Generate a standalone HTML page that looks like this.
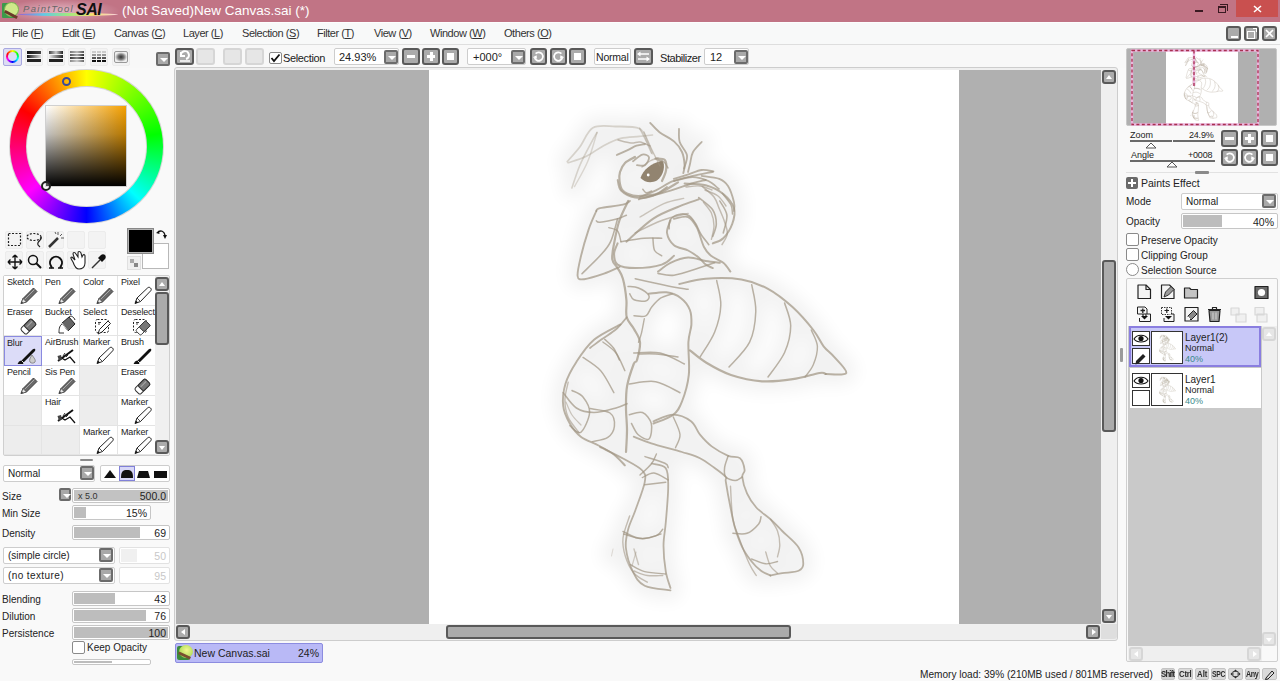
<!DOCTYPE html>
<html><head><meta charset="utf-8">
<style>
*{margin:0;padding:0;box-sizing:border-box}
html,body{width:1280px;height:681px;overflow:hidden;background:#f9f9f9;font-family:"Liberation Sans",sans-serif;font-size:11px;color:#222}
div,span,i,b{position:absolute}
.t{white-space:nowrap;line-height:1}
.mi{top:28px;font-size:11px;color:#333;letter-spacing:-0.45px}
.btn{border:2px solid #595959;background:#ababab;border-radius:3px}
.btnd{border:2px solid #d6d6d6;background:#e6e6e6;border-radius:3px}
.box{border:1px solid #cdcdcd;background:#fff;border-radius:2px}
.dd{border:2px solid #6b6b6b;background:#a9a9a9;border-radius:2px;width:14px;height:14px}
.dd:after{content:"";position:absolute;left:2px;top:4px;border-left:4px solid transparent;border-right:4px solid transparent;border-top:4px solid #fff}
.bar{border:1px solid #c6c6c6;background:#fff;border-radius:2px;overflow:hidden;height:15px}
.bar i{left:1px;top:1px;bottom:1px;background:#bdbdbd}
.bar b{right:3px;top:1px;font-weight:normal;font-size:10.5px;line-height:12px;color:#222}
.lbl{font-size:10px;color:#222;white-space:nowrap;line-height:1}
.cell{width:38px;height:30px;background:#fff;border-right:1px solid #e4e4e4;border-bottom:1px solid #e4e4e4}
.cell span{left:3px;top:2px;font-size:9px;color:#222;white-space:nowrap;line-height:1;letter-spacing:-0.15px}
.ec{background:#ededed}
.ti{width:18px;height:18px;background:#f3f3f3;border:1px solid #ececec;border-radius:2px}
</style></head><body>
<!-- ============ TITLE BAR ============ -->
<div style="left:0;top:0;width:1280px;height:22px;background:#c17485"></div>
<div style="left:0;top:0;width:120px;height:22px;background:radial-gradient(ellipse 60px 12px at 60px 11px,rgba(255,235,245,.55),rgba(255,235,245,0))"></div>
<div style="left:2px;top:3px;width:14px;height:15px;background:#3c9a4a;border-radius:1px"></div>
<div style="left:4px;top:2px;width:15px;height:15px;background:#cfe88a;border-radius:50%;border:1px solid #7ab050"></div>
<div style="left:4px;top:13px;width:14px;height:3px;background:#6a3a2a;transform:rotate(28deg)"></div>
<div style="left:18px;top:13px;width:100px;height:3px;border-radius:50%;background:linear-gradient(90deg,#9a60d0,#60c8e8,#a0e880,#f8e070,#f8d0e0)"></div>
<div class="t" style="left:23px;top:4px;font-size:9.5px;font-style:italic;color:#666;letter-spacing:1.3px">PaintTool</div>
<div class="t" style="left:76px;top:2px;font-size:16px;font-style:italic;font-weight:bold;color:#111;letter-spacing:-0.5px">SAI</div>
<div class="t" style="left:122px;top:4px;font-size:13.5px;color:#fff">(Not Saved)New Canvas.sai (*)</div>
<div style="left:1195px;top:10px;width:8px;height:2px;background:#3a1a22"></div>
<div style="left:1218px;top:6px;width:8px;height:7px;border:1px solid #3a1a22;border-top-width:2px"></div>
<div style="left:1220px;top:4px;width:8px;height:7px;border-top:1px solid #3a1a22;border-right:1px solid #3a1a22"></div>
<div style="left:1236px;top:0;width:42px;height:17px;background:#c9504f"></div>
<svg style="position:absolute;left:1253px;top:5px" width="9" height="8"><path d="M1 1L8 7M8 1L1 7" stroke="#fff" stroke-width="1.6"/></svg>

<!-- ============ MENU ============ -->
<div style="left:0;top:22px;width:1280px;height:23px;background:#f8f9f9;border-top:1px solid #fdfefe;border-bottom:1px solid #dedede"></div>
<div class="t mi" style="left:12px">File (<u>F</u>)</div>
<div class="t mi" style="left:62px">Edit (<u>E</u>)</div>
<div class="t mi" style="left:114px">Canvas (<u>C</u>)</div>
<div class="t mi" style="left:183px">Layer (<u>L</u>)</div>
<div class="t mi" style="left:242px">Selection (<u>S</u>)</div>
<div class="t mi" style="left:317px">Filter (<u>T</u>)</div>
<div class="t mi" style="left:374px">View (<u>V</u>)</div>
<div class="t mi" style="left:430px">Window (<u>W</u>)</div>
<div class="t mi" style="left:504px">Others (<u>O</u>)</div>
<div class="btn" style="left:1226px;top:26px;width:15px;height:15px"><i style="left:3px;top:8px;width:7px;height:2px;background:#fff"></i></div>
<div class="btn" style="left:1244px;top:26px;width:15px;height:15px"><i style="left:1px;top:3px;width:8px;height:8px;border:1.5px solid #fff"></i><i style="left:7px;top:0px;width:4px;height:4px;border-top:1px solid #fff;border-right:1px solid #fff"></i></div>
<div class="btn" style="left:1262px;top:26px;width:15px;height:15px"><svg style="position:absolute;left:1px;top:1px" width="9" height="9"><path d="M1 1L8 8M8 1L1 8" stroke="#fff" stroke-width="1.6"/></svg></div>

<!-- ============ TOOLBAR ============ -->
<div style="left:0;top:45px;width:1280px;height:23px;background:#f8f8f8"></div>
<div style="left:3px;top:48px;width:19px;height:18px;background:#dcdcf4;border:1px solid #a8a8e0;border-radius:2px"></div>
<div style="left:6px;top:50px;width:13px;height:13px;border-radius:50%;background:conic-gradient(#ff0,#0f0,#0ff,#00f,#f0f,#f00,#ff0)"></div>
<div style="left:8px;top:52px;width:9px;height:9px;border-radius:50%;background:#dcdcf4"></div>
<div class="ti" style="left:25px;top:48px"><i style="left:1px;top:2px;width:14px;height:3px;background:linear-gradient(90deg,#111,#444)"></i><i style="left:1px;top:6px;width:14px;height:3px;background:linear-gradient(90deg,#111,#ddd)"></i><i style="left:1px;top:10px;width:14px;height:3px;background:#222"></i></div>
<div class="ti" style="left:47px;top:48px"><i style="left:1px;top:2px;width:14px;height:3px;background:linear-gradient(90deg,#444,#ccc,#222)"></i><i style="left:1px;top:6px;width:14px;height:3px;background:linear-gradient(90deg,#eee,#222)"></i><i style="left:1px;top:10px;width:14px;height:3px;background:#222"></i></div>
<div class="ti" style="left:68px;top:48px"><i style="left:1px;top:2px;width:14px;height:2px;background:linear-gradient(90deg,#777,#bbb,#555)"></i><i style="left:1px;top:5px;width:14px;height:2px;background:linear-gradient(90deg,#555,#aaa,#333)"></i><i style="left:1px;top:8px;width:14px;height:2px;background:linear-gradient(90deg,#333,#888,#111)"></i><i style="left:1px;top:11px;width:14px;height:2px;background:linear-gradient(90deg,#888,#ccc,#666)"></i></div>
<div class="ti" style="left:90px;top:48px"><i style="left:1px;top:2px;width:14px;height:2px;background:repeating-linear-gradient(90deg,#ccc 0 2px,transparent 2px 2.5px)"></i><i style="left:1px;top:5px;width:14px;height:2px;background:repeating-linear-gradient(90deg,#999 0 2px,transparent 2px 2.5px)"></i><i style="left:1px;top:8px;width:14px;height:2px;background:repeating-linear-gradient(90deg,#555 0 2px,transparent 2px 2.5px)"></i><i style="left:1px;top:11px;width:14px;height:2px;background:repeating-linear-gradient(90deg,#111 0 2px,transparent 2px 2.5px)"></i></div>
<div class="ti" style="left:112px;top:48px"><i style="left:1px;top:2px;width:14px;height:12px;border:1px solid #999;border-radius:2px;background:radial-gradient(ellipse 5px 4px at 6px 5px,#333 0,#777 3px,#eee 6px)"></i></div>
<div class="dd" style="left:156px;top:52px"></div>
<div class="btn" style="left:175px;top:48px;width:19px;height:17px"><svg style="position:absolute;left:1px;top:0" width="14" height="13"><path d="M3 2L3 6L7 6M3 6A4 4 0 1 1 8 9" fill="none" stroke="#fff" stroke-width="2"/><path d="M2 11H12" stroke="#fff" stroke-width="1.5"/></svg></div>
<div class="btnd" style="left:196px;top:48px;width:19px;height:17px"></div>
<div class="btnd" style="left:223px;top:48px;width:19px;height:17px"></div>
<div class="btnd" style="left:245px;top:48px;width:19px;height:17px"></div>
<div style="left:269px;top:52px;width:13px;height:12px;border:1px solid #8a8a8a;background:#fff;border-radius:2px"><svg style="position:absolute;left:0;top:0" width="11" height="10"><path d="M1.5 5L4 8L9.5 1.5" fill="none" stroke="#111" stroke-width="1.8"/></svg></div>
<div class="t" style="left:283px;top:53px;font-size:11px;color:#222;letter-spacing:-0.35px">Selection</div>
<div class="box" style="left:334px;top:48px;width:65px;height:17px"></div>
<div class="t" style="left:339px;top:52px;font-size:11px">24.93%</div>
<div class="dd" style="left:384px;top:50px"></div>
<div class="btn" style="left:402px;top:48px;width:18px;height:17px"><i style="left:3px;top:5px;width:8px;height:3px;background:#fff"></i></div>
<div class="btn" style="left:422px;top:48px;width:18px;height:17px"><i style="left:3px;top:5px;width:8px;height:3px;background:#fff"></i><i style="left:5.5px;top:2px;width:3px;height:9px;background:#fff"></i></div>
<div class="btn" style="left:442px;top:48px;width:17px;height:17px"><i style="left:3px;top:3px;width:7px;height:7px;background:#fff"></i></div>
<div class="box" style="left:467px;top:48px;width:59px;height:17px"></div>
<div class="t" style="left:473px;top:52px;font-size:11px">+000°</div>
<div class="dd" style="left:511px;top:50px"></div>
<div class="btn" style="left:530px;top:48px;width:17px;height:17px"><svg style="position:absolute;left:0;top:0" width="13" height="13"><path d="M2.6 7.6A4.2 4.2 0 1 0 3.6 3.7" fill="none" stroke="#fff" stroke-width="1.7"/><path d="M0.8 7.2L4.6 5.2L5 8.8Z" fill="#fff"/></svg></div>
<div class="btn" style="left:550px;top:48px;width:17px;height:17px"><svg style="position:absolute;left:0;top:0" width="13" height="13"><path d="M10.4 7.6A4.2 4.2 0 1 1 9.4 3.7" fill="none" stroke="#fff" stroke-width="1.7"/><path d="M12.2 7.2L8.4 5.2L8 8.8Z" fill="#fff"/></svg></div>
<div class="btn" style="left:569px;top:48px;width:17px;height:17px"><i style="left:3px;top:3px;width:7px;height:7px;background:#fff"></i></div>
<div class="box" style="left:594px;top:48px;width:37px;height:17px"></div>
<div class="t" style="left:596px;top:52px;font-size:10.5px;letter-spacing:-0.2px">Normal</div>
<div class="btn" style="left:634px;top:48px;width:19px;height:17px"><svg style="position:absolute;left:0;top:0" width="15" height="13"><path d="M4 4H13M2 9H11" stroke="#fff" stroke-width="1.6"/><path d="M1 4L4.5 1.5V6.5Z M14 9L10.5 6.5V11.5Z" fill="#fff"/></svg></div>
<div class="t" style="left:660px;top:53px;font-size:11px;letter-spacing:-0.45px">Stabilizer</div>
<div class="box" style="left:704px;top:48px;width:45px;height:17px"></div>
<div class="t" style="left:710px;top:52px;font-size:11px">12</div>
<div class="dd" style="left:734px;top:50px"></div>

<!-- ============ CANVAS ============ -->
<div style="left:174px;top:67px;width:944px;height:574px;background:#efefef;border:1px solid #cdcdcd;border-radius:3px"></div>
<div style="left:176px;top:70px;width:925px;height:554px;background:#b0b0b0"></div>
<div id="page" style="left:429px;top:70px;width:530px;height:554px;background:#fff;overflow:hidden"><svg style="position:absolute;left:0;top:0" width="530" height="554" viewBox="429 70 530 554">
<defs><radialGradient id="hz"><stop offset="0" stop-color="#000" stop-opacity=".03"/><stop offset="1" stop-color="#000" stop-opacity="0"/></radialGradient></defs>
<filter id="bl" x="-20%" y="-20%" width="140%" height="140%"><feGaussianBlur stdDeviation="9"/></filter>
<g filter="url(#bl)" opacity="0.05" fill="none" stroke="#000" stroke-width="20" stroke-linecap="round"><path d="M567.3 161.5C569.4 159.1 575.5 152.6 579.8 147.0C584.1 141.4 587.0 131.2 593.0 127.8C599.0 124.4 607.8 126.4 615.5 126.5C623.2 126.6 634.0 126.0 639.3 128.5C644.6 131.0 645.0 137.5 647.2 141.7C649.4 145.9 651.6 151.6 652.5 153.6"/><path d="M568.0 162.8C571.1 161.7 580.5 159.0 586.4 156.2C592.3 153.3 597.9 148.7 603.6 145.7C609.3 142.7 614.8 139.9 620.8 138.4C626.8 136.9 634.0 137.0 639.3 136.4C644.6 135.8 650.3 135.2 652.5 135.0"/><path d="M571.9 188.0C573.2 184.2 576.7 172.8 579.8 165.5C582.9 158.2 587.5 149.8 590.4 144.3C593.3 138.8 595.9 134.5 597.0 132.5"/><path d="M574.5 186.6C576.7 182.4 584.0 170.5 587.7 161.5C591.5 152.5 595.5 137.3 597.0 132.5"/><path d="M650.2 122.9C651.8 124.5 655.5 129.1 659.5 132.2C663.5 135.3 670.2 138.1 674.0 141.4C677.8 144.7 680.2 148.0 682.0 152.0C683.8 156.0 684.4 161.7 684.6 165.2C684.8 168.7 683.5 171.8 683.3 173.1"/><path d="M679.0 128.8C679.1 131.0 678.4 137.6 679.7 142.0C681.0 146.4 686.3 150.9 687.0 155.3C687.7 159.7 684.5 166.3 684.0 168.5"/><path d="M701.7 142.0C700.2 143.7 694.9 148.6 692.9 152.3C690.9 156.0 690.8 160.7 690.0 164.0C689.2 167.3 688.3 170.7 688.0 172.0"/><path d="M616.8 155.0C618.8 154.1 625.4 151.2 628.7 149.6C632.0 148.0 633.9 146.6 636.6 145.7C639.3 144.8 643.6 144.3 645.0 144.0"/><path d="M618.0 140.0C620.2 140.5 627.3 142.7 631.0 143.0C634.7 143.3 636.8 141.5 640.0 142.0C643.2 142.5 648.3 145.3 650.0 146.0"/><path d="M644.0 132.0C645.3 135.0 649.3 144.3 652.0 150.0C654.7 155.7 658.7 163.3 660.0 166.0"/><path d="M658.0 160.0C659.0 160.3 662.3 160.7 664.0 162.0C665.7 163.3 667.3 167.0 668.0 168.0"/><path d="M635.0 157.0C633.3 158.0 627.5 160.5 625.0 163.0C622.5 165.5 620.9 169.0 620.0 172.0C619.1 175.0 619.1 177.9 619.5 181.0C619.9 184.1 620.2 187.9 622.5 190.3C624.8 192.7 629.0 194.7 633.0 195.6C637.0 196.5 641.9 196.0 646.3 195.6C650.7 195.2 654.2 195.2 659.5 193.0C664.8 190.8 674.9 184.2 678.0 182.4"/><path d="M633.0 161.3C634.5 160.2 639.6 155.3 642.3 154.6C645.0 153.9 648.5 155.5 649.0 157.3C649.5 159.1 647.0 163.9 645.0 165.2C643.0 166.5 638.3 165.2 637.0 165.2"/><path d="M639.6 128.2C640.7 130.4 644.3 137.2 646.3 141.4C648.3 145.6 650.6 151.3 651.5 153.3"/><path d="M674.0 181.1C677.1 180.4 686.8 177.1 692.5 177.1C698.2 177.1 704.0 179.1 708.4 181.1C712.8 183.1 717.2 187.7 719.0 189.0"/><path d="M642.8 189.3C643.4 189.9 644.8 192.5 646.3 192.8C647.8 193.1 650.7 191.3 651.6 191.0"/><path d="M655.5 158.6C657.0 158.8 663.0 158.0 664.8 160.0C666.5 162.0 666.5 167.0 666.0 170.5C665.5 174.0 662.7 179.2 662.0 181.0"/><path d="M642.0 167.0C643.3 166.0 647.3 162.5 650.0 161.0C652.7 159.5 656.7 158.5 658.0 158.0"/><path d="M673.8 178.8C676.2 178.1 683.9 175.8 688.5 174.3C693.1 172.8 697.6 170.5 701.7 170.0C705.9 169.5 711.5 171.2 713.4 171.4"/><path d="M701.7 175.8C704.6 176.3 714.9 177.1 719.3 178.8C723.7 180.5 725.5 182.1 728.0 186.0C730.5 189.9 733.0 198.1 734.0 202.3C735.0 206.5 734.0 209.6 734.0 211.0"/><path d="M722.3 193.4C723.8 195.3 729.3 201.6 731.0 205.0C732.7 208.4 732.2 212.5 732.5 214.0"/><path d="M638.8 199.4C644.1 197.9 661.7 193.2 670.5 190.6C679.3 187.9 685.7 185.3 691.6 183.5C697.5 181.7 703.4 180.6 705.7 180.0"/><path d="M684.6 183.5C688.1 183.8 699.2 183.6 705.7 185.3C712.2 187.1 718.6 190.2 723.3 194.0C728.0 197.8 732.5 203.2 734.0 208.2C735.5 213.2 734.0 219.0 732.2 224.0C730.4 229.0 726.5 235.0 723.3 238.2C720.1 241.4 714.5 242.5 712.8 243.4"/><path d="M698.7 197.6C701.1 199.7 709.9 205.6 712.8 210.0C715.7 214.4 716.3 219.6 716.3 224.0C716.3 228.4 713.4 234.3 712.8 236.4"/><path d="M719.8 201.0C721.0 203.4 726.3 209.9 726.9 215.2C727.5 220.5 723.9 229.9 723.3 232.9"/><path d="M626.4 241.7C630.8 237.9 644.1 224.7 652.9 218.8C661.7 212.9 671.7 209.6 679.3 206.4C686.9 203.2 695.5 200.6 698.7 199.4"/><path d="M635.2 232.9C639.6 230.8 652.9 223.7 661.7 220.5C670.5 217.3 683.7 214.7 688.1 213.5"/><path d="M686.0 187.0C688.3 186.8 695.7 185.5 700.0 186.0C704.3 186.5 710.0 189.3 712.0 190.0"/><path d="M705.0 190.0C707.2 191.0 714.5 193.3 718.0 196.0C721.5 198.7 724.7 204.3 726.0 206.0"/><path d="M640.0 197.0C642.6 195.9 650.4 193.0 655.9 190.4C661.4 187.8 666.8 183.6 673.0 181.2C679.2 178.8 686.3 177.4 692.9 175.9C699.5 174.4 709.5 172.6 712.8 171.9"/><path d="M702.2 186.5C704.2 188.2 711.1 193.2 714.0 197.0C716.9 200.8 717.6 204.8 719.4 209.0C721.2 213.2 723.4 218.0 724.7 222.2C726.0 226.4 727.8 230.2 727.3 234.0C726.8 237.8 722.9 242.9 722.0 244.7"/><path d="M703.5 202.3C704.8 204.1 709.6 209.1 711.4 213.0C713.1 216.9 714.0 221.6 714.0 226.0C714.0 230.4 711.8 237.2 711.4 239.4"/><path d="M640.0 217.0C644.0 214.8 656.5 206.7 663.8 203.6C671.1 200.5 680.4 199.3 683.7 198.4"/><path d="M669.1 228.8C669.3 227.2 668.6 221.9 670.4 219.5C672.2 217.1 676.6 214.8 679.7 214.2C682.8 213.5 686.4 214.0 689.0 215.6C691.6 217.2 693.6 220.4 695.6 223.5C697.6 226.6 698.6 230.5 700.8 234.0C703.0 237.5 707.5 242.9 708.8 244.7"/><path d="M596.3 211.0C595.0 214.1 591.1 222.1 588.6 229.6C586.1 237.1 582.8 248.3 581.0 256.0C579.2 263.7 577.1 272.1 577.6 276.0C578.1 279.9 579.8 279.6 584.2 279.2C588.6 278.8 598.1 275.7 604.0 273.7C609.9 271.7 616.9 268.1 619.5 267.0"/><path d="M596.3 211.0C596.9 210.5 595.6 209.2 600.0 208.2C604.4 207.1 617.9 205.9 622.9 204.7C627.9 203.5 628.8 201.6 630.0 201.0"/><path d="M596.3 220.8C596.9 221.1 596.5 222.6 600.0 222.3C603.5 222.0 613.2 220.0 617.6 218.8C622.0 217.6 624.9 215.8 626.4 215.2"/><path d="M617.6 218.8C616.4 222.6 613.5 235.5 610.6 241.7C607.7 247.9 604.8 250.5 600.0 255.8C595.2 261.1 585.0 270.7 582.0 273.7"/><path d="M628.2 201.0C626.7 204.2 621.8 213.4 619.4 220.5C617.0 227.6 615.3 236.9 614.1 243.4C612.9 249.9 611.7 255.2 612.3 259.3C612.9 263.4 615.8 264.9 617.6 268.1C619.4 271.3 621.4 273.4 622.9 278.7C624.4 284.0 625.8 293.4 626.4 299.8C627.0 306.2 625.4 312.4 626.7 317.3C628.0 322.2 631.8 324.8 634.0 329.0C636.2 333.2 639.5 337.1 640.0 342.3C640.5 347.5 638.0 356.4 637.0 360.0C636.0 363.6 635.4 359.7 633.7 364.0C632.1 368.3 628.4 378.7 627.1 386.0C625.8 393.3 626.0 400.7 626.0 408.0C626.0 415.3 627.0 422.7 627.0 430.0C627.0 437.3 626.2 448.3 626.0 452.0"/><path d="M617.6 243.4C617.0 245.2 614.1 250.5 614.1 254.0C614.1 257.5 614.1 262.2 617.6 264.6C621.1 267.0 627.9 268.1 635.2 268.1C642.6 268.1 655.2 266.7 661.7 264.6C668.2 262.6 672.0 257.3 674.0 255.8"/><path d="M621.0 241.7C624.8 241.1 637.2 238.8 644.0 238.2C650.8 237.6 658.8 238.2 661.7 238.2"/><path d="M608.8 227.6C610.3 228.2 615.6 228.7 617.6 231.0C619.6 233.3 620.4 239.9 621.0 241.7"/><path d="M652.9 238.2C653.2 240.2 653.1 247.6 654.6 250.5C656.1 253.4 660.5 254.9 661.7 255.8"/><path d="M635.2 278.7C640.5 279.9 658.2 283.9 667.0 285.7C675.8 287.5 684.6 288.7 688.1 289.3"/><path d="M617.6 180.0C618.2 181.8 618.1 187.7 621.0 190.6C623.9 193.5 629.9 196.7 635.2 197.6C640.5 198.5 647.6 197.7 652.9 195.9C658.2 194.1 664.6 188.5 667.0 187.0"/><path d="M670.5 220.5C669.9 222.6 666.4 228.8 667.0 232.9C667.6 237.0 670.5 242.3 674.0 245.2C677.5 248.1 684.0 248.4 688.1 250.5C692.2 252.6 695.8 255.2 698.7 257.5C701.6 259.9 703.4 262.8 705.7 264.6C708.1 266.4 711.6 267.5 712.8 268.1"/><path d="M674.0 218.8C676.4 218.5 684.3 215.5 688.1 217.0C691.9 218.5 694.2 222.6 696.9 227.6C699.5 232.6 701.6 242.3 704.0 247.0C706.4 251.7 707.8 253.2 711.0 255.8C714.2 258.4 720.1 260.2 723.3 262.8C726.5 265.4 729.2 270.1 730.4 271.6"/><path d="M658.0 271.6C660.1 270.1 665.5 265.2 670.5 262.8C675.5 260.4 682.2 257.8 688.1 257.5C694.0 257.2 700.4 260.1 705.7 261.0C711.0 261.9 717.4 262.5 719.8 262.8"/><path d="M658.0 273.4C660.7 273.7 667.2 276.1 674.0 275.2C680.8 274.3 692.0 270.2 698.7 268.1C705.5 266.0 711.9 263.7 714.5 262.8"/><path d="M679.3 284.0C683.7 283.1 695.4 279.4 705.7 278.7C716.1 277.9 731.0 277.8 741.4 279.5C751.8 281.2 759.4 284.2 768.0 288.8C776.6 293.4 785.2 300.4 792.8 307.3C800.3 314.2 808.2 323.5 813.3 330.0C818.4 336.5 820.2 341.9 823.6 346.3C827.0 350.7 830.1 352.2 833.9 356.6C837.7 361.1 847.6 370.1 846.2 373.0C844.8 375.9 829.1 373.8 825.7 374.0"/><path d="M690.0 350.4C692.7 352.5 699.6 358.7 706.4 362.8C713.2 366.9 721.7 371.9 731.0 375.0C740.3 378.1 751.7 380.6 762.0 381.3C772.3 382.0 783.2 380.6 792.8 379.2C802.4 377.8 814.0 373.9 819.5 373.0C825.0 372.1 824.7 373.8 825.7 374.0"/><path d="M716.7 280.6C717.4 284.7 721.1 296.6 720.8 305.2C720.5 313.8 718.1 323.4 714.7 332.0C711.3 340.6 702.7 352.5 700.3 356.6"/><path d="M751.7 284.7C752.4 289.1 756.1 301.8 755.8 311.4C755.4 321.0 754.1 332.9 749.6 342.2C745.1 351.5 732.4 362.9 729.0 367.0"/><path d="M784.6 303.0C785.6 306.8 790.7 317.6 790.7 325.8C790.7 334.1 788.4 344.0 784.6 352.5C780.8 361.0 770.8 372.9 768.0 377.0"/><path d="M811.3 330.0C812.3 332.7 817.1 340.5 817.4 346.3C817.7 352.1 815.4 359.7 813.3 364.8C811.2 369.9 806.4 375.0 805.0 377.0"/><path d="M620.5 324.4C616.1 327.0 601.4 333.6 594.0 339.8C586.6 346.1 581.2 354.5 576.4 361.9C571.6 369.2 567.6 376.6 565.4 383.9C563.2 391.2 562.5 399.3 563.2 405.9C563.9 412.5 566.9 418.4 569.8 423.5C572.7 428.6 576.0 433.0 580.8 436.7C585.6 440.4 593.0 442.6 598.5 445.5C604.0 448.4 609.5 451.1 613.9 454.4C618.3 457.7 623.1 463.6 624.9 465.4"/><path d="M626.7 317.3C625.0 319.2 620.6 325.3 616.4 329.0C612.2 332.7 606.1 336.1 601.7 339.3C597.3 342.5 592.0 346.6 590.0 348.0"/><path d="M604.7 339.3C606.2 340.8 611.0 344.6 613.5 348.0C616.0 351.4 618.4 358.0 619.4 360.0"/><path d="M648.8 293.8C651.7 293.6 661.0 291.6 666.4 292.3C671.8 293.0 677.1 295.2 681.0 298.2C684.9 301.1 688.2 305.6 689.9 310.0C691.6 314.4 691.6 319.2 691.4 324.6C691.1 330.0 688.8 333.9 688.4 342.3C688.0 350.7 689.9 365.1 688.8 375.0C687.7 384.9 684.6 394.9 682.0 401.5C679.4 408.1 678.0 411.0 673.3 414.7C668.5 418.4 656.8 422.0 653.5 423.5"/><path d="M634.0 315.8C636.0 315.8 642.8 317.3 645.8 315.8C648.8 314.3 649.2 309.9 651.7 307.0C654.2 304.1 657.1 300.4 660.5 298.2C663.9 296.0 670.3 294.5 672.3 293.8"/><path d="M644.3 318.8C643.8 321.2 642.4 329.5 641.4 333.4C640.4 337.3 639.0 340.8 638.5 342.3"/><path d="M628.0 286.4C629.8 286.7 635.0 286.5 638.5 288.0C642.0 289.5 647.6 293.1 648.8 295.3C650.0 297.5 648.3 300.3 645.8 301.0C643.3 301.7 636.7 300.9 634.0 299.7C631.3 298.5 630.4 294.8 629.7 293.8"/><path d="M638.5 354.0C641.4 354.0 649.4 353.5 656.0 354.0C662.6 354.5 674.3 356.5 678.0 357.0"/><path d="M583.0 357.4C586.0 359.6 595.6 364.8 600.7 370.7C605.9 376.6 611.7 389.0 613.9 392.7"/><path d="M602.9 342.0C605.1 343.8 612.3 348.2 616.0 353.0C619.7 357.8 623.4 367.8 624.9 370.7"/><path d="M563.2 392.7C565.4 395.2 571.3 404.7 576.4 408.0C581.5 411.3 587.4 412.5 594.0 412.5C600.6 412.5 610.5 409.5 616.0 408.0C621.5 406.5 625.2 404.4 627.0 403.7"/><path d="M572.0 390.5C573.8 391.6 580.1 393.3 583.0 397.0C585.9 400.7 590.0 406.6 589.6 412.5C589.2 418.4 584.1 430.1 580.8 432.3C577.5 434.5 571.6 426.8 569.8 425.7"/><path d="M568.2 382.2C567.7 385.1 564.9 393.9 564.9 399.8C564.9 405.7 565.8 411.9 568.2 417.4C570.6 422.9 577.4 430.2 579.2 432.8"/><path d="M590.2 408.6C593.5 409.3 606.0 410.1 610.0 413.0C614.0 415.9 614.8 422.1 614.4 426.2C614.0 430.3 611.5 434.8 607.8 437.4C604.1 440.0 595.0 440.9 592.4 441.6"/><path d="M566.0 402.0C567.0 404.2 569.5 411.2 572.0 415.0C574.5 418.8 579.5 423.3 581.0 425.0"/><path d="M633.7 353.0C638.1 353.0 651.5 351.2 660.0 353.0C668.5 354.8 680.3 362.2 684.4 364.0"/><path d="M629.3 383.9C633.7 383.5 647.2 380.2 655.7 381.7C664.2 383.2 676.0 390.9 680.0 392.7"/><path d="M629.3 414.7C631.5 414.3 638.8 411.0 642.5 412.5C646.2 414.0 650.2 419.1 651.3 423.5C652.4 427.9 651.2 437.2 649.0 439.0C646.8 440.8 640.9 437.1 638.0 434.5C635.1 431.9 632.6 425.3 631.5 423.5"/><path d="M673.3 417.0C674.4 419.9 679.6 429.4 680.0 434.5C680.4 439.6 676.2 445.5 675.5 447.7"/><path d="M653.5 421.3C656.8 420.2 667.0 414.7 673.3 414.7C679.5 414.7 686.5 418.0 691.0 421.3C695.5 424.6 696.5 430.5 700.0 434.7C703.5 438.9 707.0 442.9 711.7 446.4C716.4 449.9 723.5 453.8 728.2 455.8C732.9 457.8 737.2 455.8 739.9 458.2C742.6 460.6 744.2 466.9 744.6 470.0C745.0 473.1 741.9 473.1 742.3 477.0C742.7 480.9 744.7 488.3 747.0 493.4C749.3 498.5 752.4 503.2 756.3 507.5C760.2 511.8 766.1 515.3 770.4 519.2C774.7 523.1 777.5 526.3 782.2 531.0C786.9 535.7 795.1 541.9 798.6 547.4C802.1 552.9 803.3 559.9 803.3 563.8C803.3 567.7 802.1 569.2 798.6 570.8C795.1 572.4 786.9 572.4 782.2 573.2C777.5 574.0 772.4 575.1 770.4 575.5"/><path d="M633.7 436.7C636.6 437.8 643.2 440.8 651.3 443.3C659.3 445.9 673.9 449.5 682.0 452.0C690.1 454.5 694.7 455.6 700.0 458.2C705.3 460.8 709.7 464.5 714.0 467.6C718.3 470.7 723.8 474.7 725.8 477.0C727.8 479.3 725.0 476.5 725.8 481.6C726.6 486.7 728.9 499.7 730.5 507.5C732.1 515.3 733.2 522.0 735.2 528.6C737.2 535.2 739.6 541.9 742.3 547.4C745.0 552.9 748.5 557.6 751.6 561.5C754.7 565.4 757.9 568.5 761.0 570.8C764.1 573.1 768.8 574.7 770.4 575.5"/><path d="M730.5 486.3C730.9 491.8 731.3 510.2 732.9 519.2C734.5 528.2 737.2 532.9 739.9 540.3C742.6 547.7 746.6 557.9 749.3 563.8C752.0 569.7 755.1 573.5 756.3 575.5"/><path d="M770.4 519.2C771.6 521.2 775.9 526.7 777.5 531.0C779.1 535.3 779.8 540.7 779.8 545.0C779.8 549.3 777.9 554.8 777.5 556.8"/><path d="M728.2 455.8C727.6 457.8 725.0 464.1 724.6 467.6C724.2 471.1 724.0 474.9 725.8 477.0C727.6 479.1 732.5 480.5 735.2 480.5C738.0 480.5 741.1 477.6 742.3 477.0"/><path d="M732.9 533.3C735.2 533.3 742.7 534.9 747.0 533.3C751.3 531.7 756.4 526.6 758.7 523.9C761.0 521.1 760.6 518.0 761.0 516.8"/><path d="M751.6 559.0C754.0 559.8 761.4 563.4 765.7 563.8C770.0 564.2 775.5 561.9 777.5 561.5"/><path d="M765.7 552.0C766.5 554.3 768.4 562.5 770.4 566.0C772.4 569.5 776.3 572.0 777.5 573.2"/><path d="M600.0 447.0C603.9 449.0 616.5 454.9 623.5 458.8C630.5 462.7 638.8 466.6 642.3 470.5C645.8 474.4 645.9 475.6 644.7 482.3C643.5 489.0 638.0 502.7 635.3 510.5C632.5 518.3 629.8 523.0 628.2 529.3C626.6 535.5 625.1 541.0 625.9 548.0C626.7 555.0 629.8 565.3 632.9 571.6C636.0 577.9 638.4 582.6 644.7 585.7C651.0 588.8 666.2 589.6 670.5 590.4"/><path d="M651.7 463.5C654.1 464.3 663.0 464.3 665.8 468.2C668.5 472.1 668.2 478.0 668.2 487.0C668.2 496.0 666.6 512.5 665.8 522.3C665.0 532.1 663.5 537.6 663.5 545.8C663.5 554.0 664.6 564.6 665.8 571.6C667.0 578.6 669.7 585.3 670.5 588.0"/><path d="M642.3 477.6C644.2 476.8 649.7 472.6 654.0 473.0C658.3 473.4 665.8 478.8 668.2 480.0"/><path d="M644.7 484.7L665.8 482.3"/><path d="M640.0 475.0C642.0 473.1 649.0 467.0 651.7 463.5C654.4 460.0 655.6 455.6 656.4 454.0"/><path d="M623.5 534.0C626.6 534.8 636.0 538.7 642.3 538.7C648.5 538.7 657.9 534.8 661.0 534.0"/><path d="M630.5 564.6C632.9 565.8 638.8 570.0 644.7 571.6C650.6 573.2 662.3 573.6 665.8 574.0"/><path d="M629.6 516.0C628.5 519.7 623.7 531.4 623.0 538.0C622.3 544.6 623.4 549.8 625.2 555.7C627.0 561.6 630.3 568.9 634.0 573.3C637.7 577.7 645.1 580.7 647.3 582.2"/><path d="M634.0 571.0C636.2 571.8 642.5 574.8 647.3 575.5C652.1 576.2 660.1 575.5 662.7 575.5"/><path d="M634.0 549.0L638.5 564.5"/><path d="M636.0 552.0L632.0 566.0"/><path d="M613.0 549.0L611.5 556.0"/><path d="M623.0 531.5C625.6 532.6 633.0 537.4 638.5 538.1C644.0 538.8 652.0 537.4 656.0 535.9C660.0 534.4 661.6 530.4 662.7 529.3"/><path d="M645.0 456.6C648.3 457.7 661.0 461.4 664.9 463.2C668.8 465.0 667.7 466.9 668.2 467.6"/></g>
<path d="M640.5 178C643 170 651 163 662.5 160.5C665.5 165 664 175 657 180.5C651 183.5 645 182.5 640.5 178Z" fill="#928470"/><circle cx="648.2" cy="175" r="1.4" fill="#fff"/>
<g id="skg" fill="none" stroke="#a19583" stroke-linecap="round">
<path d="M567.3 161.5C569.4 159.1 575.5 152.6 579.8 147.0C584.1 141.4 587.0 131.2 593.0 127.8C599.0 124.4 607.8 126.4 615.5 126.5C623.2 126.6 634.0 126.0 639.3 128.5C644.6 131.0 645.0 137.5 647.2 141.7C649.4 145.9 651.6 151.6 652.5 153.6" stroke-width="1.8" stroke-opacity="0.36"/>
<path d="M568.0 162.8C571.1 161.7 580.5 159.0 586.4 156.2C592.3 153.3 597.9 148.7 603.6 145.7C609.3 142.7 614.8 139.9 620.8 138.4C626.8 136.9 634.0 137.0 639.3 136.4C644.6 135.8 650.3 135.2 652.5 135.0" stroke-width="1.6" stroke-opacity="0.36"/>
<path d="M571.9 188.0C573.2 184.2 576.7 172.8 579.8 165.5C582.9 158.2 587.5 149.8 590.4 144.3C593.3 138.8 595.9 134.5 597.0 132.5" stroke-width="1.6" stroke-opacity="0.36"/>
<path d="M574.5 186.6C576.7 182.4 584.0 170.5 587.7 161.5C591.5 152.5 595.5 137.3 597.0 132.5" stroke-width="1.4" stroke-opacity="0.32"/>
<path d="M650.2 122.9C651.8 124.5 655.5 129.1 659.5 132.2C663.5 135.3 670.2 138.1 674.0 141.4C677.8 144.7 680.2 148.0 682.0 152.0C683.8 156.0 684.4 161.7 684.6 165.2C684.8 168.7 683.5 171.8 683.3 173.1" stroke-width="1.9" stroke-opacity="0.72"/>
<path d="M679.0 128.8C679.1 131.0 678.4 137.6 679.7 142.0C681.0 146.4 686.3 150.9 687.0 155.3C687.7 159.7 684.5 166.3 684.0 168.5" stroke-width="1.8" stroke-opacity="0.72"/>
<path d="M701.7 142.0C700.2 143.7 694.9 148.6 692.9 152.3C690.9 156.0 690.8 160.7 690.0 164.0C689.2 167.3 688.3 170.7 688.0 172.0" stroke-width="1.8" stroke-opacity="0.72"/>
<path d="M616.8 155.0C618.8 154.1 625.4 151.2 628.7 149.6C632.0 148.0 633.9 146.6 636.6 145.7C639.3 144.8 643.6 144.3 645.0 144.0" stroke-width="1.8" stroke-opacity="0.72"/>
<path d="M618.0 140.0C620.2 140.5 627.3 142.7 631.0 143.0C634.7 143.3 636.8 141.5 640.0 142.0C643.2 142.5 648.3 145.3 650.0 146.0" stroke-width="1.5" stroke-opacity="0.58"/>
<path d="M644.0 132.0C645.3 135.0 649.3 144.3 652.0 150.0C654.7 155.7 658.7 163.3 660.0 166.0" stroke-width="1.4" stroke-opacity="0.50"/>
<path d="M658.0 160.0C659.0 160.3 662.3 160.7 664.0 162.0C665.7 163.3 667.3 167.0 668.0 168.0" stroke-width="1.4" stroke-opacity="0.72"/>
<path d="M635.0 157.0C633.3 158.0 627.5 160.5 625.0 163.0C622.5 165.5 620.9 169.0 620.0 172.0C619.1 175.0 619.1 177.9 619.5 181.0C619.9 184.1 620.2 187.9 622.5 190.3C624.8 192.7 629.0 194.7 633.0 195.6C637.0 196.5 641.9 196.0 646.3 195.6C650.7 195.2 654.2 195.2 659.5 193.0C664.8 190.8 674.9 184.2 678.0 182.4" stroke-width="2.2" stroke-opacity="0.72"/>
<path d="M633.0 161.3C634.5 160.2 639.6 155.3 642.3 154.6C645.0 153.9 648.5 155.5 649.0 157.3C649.5 159.1 647.0 163.9 645.0 165.2C643.0 166.5 638.3 165.2 637.0 165.2" stroke-width="1.8" stroke-opacity="0.72"/>
<path d="M639.6 128.2C640.7 130.4 644.3 137.2 646.3 141.4C648.3 145.6 650.6 151.3 651.5 153.3" stroke-width="1.5" stroke-opacity="0.43"/>
<path d="M674.0 181.1C677.1 180.4 686.8 177.1 692.5 177.1C698.2 177.1 704.0 179.1 708.4 181.1C712.8 183.1 717.2 187.7 719.0 189.0" stroke-width="1.6" stroke-opacity="0.72"/>
<path d="M642.8 189.3C643.4 189.9 644.8 192.5 646.3 192.8C647.8 193.1 650.7 191.3 651.6 191.0" stroke-width="1.5" stroke-opacity="0.72"/>
<path d="M655.5 158.6C657.0 158.8 663.0 158.0 664.8 160.0C666.5 162.0 666.5 167.0 666.0 170.5C665.5 174.0 662.7 179.2 662.0 181.0" stroke-width="2.2" stroke-opacity="0.72"/>
<path d="M642.0 167.0C643.3 166.0 647.3 162.5 650.0 161.0C652.7 159.5 656.7 158.5 658.0 158.0" stroke-width="1.4" stroke-opacity="0.50"/>
<path d="M673.8 178.8C676.2 178.1 683.9 175.8 688.5 174.3C693.1 172.8 697.6 170.5 701.7 170.0C705.9 169.5 711.5 171.2 713.4 171.4" stroke-width="1.9" stroke-opacity="0.72"/>
<path d="M701.7 175.8C704.6 176.3 714.9 177.1 719.3 178.8C723.7 180.5 725.5 182.1 728.0 186.0C730.5 189.9 733.0 198.1 734.0 202.3C735.0 206.5 734.0 209.6 734.0 211.0" stroke-width="1.8" stroke-opacity="0.72"/>
<path d="M722.3 193.4C723.8 195.3 729.3 201.6 731.0 205.0C732.7 208.4 732.2 212.5 732.5 214.0" stroke-width="1.5" stroke-opacity="0.72"/>
<path d="M638.8 199.4C644.1 197.9 661.7 193.2 670.5 190.6C679.3 187.9 685.7 185.3 691.6 183.5C697.5 181.7 703.4 180.6 705.7 180.0" stroke-width="1.9" stroke-opacity="0.72"/>
<path d="M684.6 183.5C688.1 183.8 699.2 183.6 705.7 185.3C712.2 187.1 718.6 190.2 723.3 194.0C728.0 197.8 732.5 203.2 734.0 208.2C735.5 213.2 734.0 219.0 732.2 224.0C730.4 229.0 726.5 235.0 723.3 238.2C720.1 241.4 714.5 242.5 712.8 243.4" stroke-width="2.0" stroke-opacity="0.72"/>
<path d="M698.7 197.6C701.1 199.7 709.9 205.6 712.8 210.0C715.7 214.4 716.3 219.6 716.3 224.0C716.3 228.4 713.4 234.3 712.8 236.4" stroke-width="1.6" stroke-opacity="0.72"/>
<path d="M719.8 201.0C721.0 203.4 726.3 209.9 726.9 215.2C727.5 220.5 723.9 229.9 723.3 232.9" stroke-width="1.6" stroke-opacity="0.72"/>
<path d="M626.4 241.7C630.8 237.9 644.1 224.7 652.9 218.8C661.7 212.9 671.7 209.6 679.3 206.4C686.9 203.2 695.5 200.6 698.7 199.4" stroke-width="2.0" stroke-opacity="0.72"/>
<path d="M635.2 232.9C639.6 230.8 652.9 223.7 661.7 220.5C670.5 217.3 683.7 214.7 688.1 213.5" stroke-width="1.5" stroke-opacity="0.58"/>
<path d="M686.0 187.0C688.3 186.8 695.7 185.5 700.0 186.0C704.3 186.5 710.0 189.3 712.0 190.0" stroke-width="1.4" stroke-opacity="0.58"/>
<path d="M705.0 190.0C707.2 191.0 714.5 193.3 718.0 196.0C721.5 198.7 724.7 204.3 726.0 206.0" stroke-width="1.4" stroke-opacity="0.58"/>
<path d="M640.0 197.0C642.6 195.9 650.4 193.0 655.9 190.4C661.4 187.8 666.8 183.6 673.0 181.2C679.2 178.8 686.3 177.4 692.9 175.9C699.5 174.4 709.5 172.6 712.8 171.9" stroke-width="1.8" stroke-opacity="0.72"/>
<path d="M702.2 186.5C704.2 188.2 711.1 193.2 714.0 197.0C716.9 200.8 717.6 204.8 719.4 209.0C721.2 213.2 723.4 218.0 724.7 222.2C726.0 226.4 727.8 230.2 727.3 234.0C726.8 237.8 722.9 242.9 722.0 244.7" stroke-width="1.5" stroke-opacity="0.58"/>
<path d="M703.5 202.3C704.8 204.1 709.6 209.1 711.4 213.0C713.1 216.9 714.0 221.6 714.0 226.0C714.0 230.4 711.8 237.2 711.4 239.4" stroke-width="1.4" stroke-opacity="0.58"/>
<path d="M640.0 217.0C644.0 214.8 656.5 206.7 663.8 203.6C671.1 200.5 680.4 199.3 683.7 198.4" stroke-width="1.4" stroke-opacity="0.50"/>
<path d="M669.1 228.8C669.3 227.2 668.6 221.9 670.4 219.5C672.2 217.1 676.6 214.8 679.7 214.2C682.8 213.5 686.4 214.0 689.0 215.6C691.6 217.2 693.6 220.4 695.6 223.5C697.6 226.6 698.6 230.5 700.8 234.0C703.0 237.5 707.5 242.9 708.8 244.7" stroke-width="1.6" stroke-opacity="0.72"/>
<path d="M596.3 211.0C595.0 214.1 591.1 222.1 588.6 229.6C586.1 237.1 582.8 248.3 581.0 256.0C579.2 263.7 577.1 272.1 577.6 276.0C578.1 279.9 579.8 279.6 584.2 279.2C588.6 278.8 598.1 275.7 604.0 273.7C609.9 271.7 616.9 268.1 619.5 267.0" stroke-width="1.9" stroke-opacity="0.72"/>
<path d="M596.3 211.0C596.9 210.5 595.6 209.2 600.0 208.2C604.4 207.1 617.9 205.9 622.9 204.7C627.9 203.5 628.8 201.6 630.0 201.0" stroke-width="1.8" stroke-opacity="0.72"/>
<path d="M596.3 220.8C596.9 221.1 596.5 222.6 600.0 222.3C603.5 222.0 613.2 220.0 617.6 218.8C622.0 217.6 624.9 215.8 626.4 215.2" stroke-width="1.5" stroke-opacity="0.72"/>
<path d="M617.6 218.8C616.4 222.6 613.5 235.5 610.6 241.7C607.7 247.9 604.8 250.5 600.0 255.8C595.2 261.1 585.0 270.7 582.0 273.7" stroke-width="1.6" stroke-opacity="0.72"/>
<path d="M628.2 201.0C626.7 204.2 621.8 213.4 619.4 220.5C617.0 227.6 615.3 236.9 614.1 243.4C612.9 249.9 611.7 255.2 612.3 259.3C612.9 263.4 615.8 264.9 617.6 268.1C619.4 271.3 621.4 273.4 622.9 278.7C624.4 284.0 625.8 293.4 626.4 299.8C627.0 306.2 625.4 312.4 626.7 317.3C628.0 322.2 631.8 324.8 634.0 329.0C636.2 333.2 639.5 337.1 640.0 342.3C640.5 347.5 638.0 356.4 637.0 360.0C636.0 363.6 635.4 359.7 633.7 364.0C632.1 368.3 628.4 378.7 627.1 386.0C625.8 393.3 626.0 400.7 626.0 408.0C626.0 415.3 627.0 422.7 627.0 430.0C627.0 437.3 626.2 448.3 626.0 452.0" stroke-width="2.2" stroke-opacity="0.72"/>
<path d="M617.6 243.4C617.0 245.2 614.1 250.5 614.1 254.0C614.1 257.5 614.1 262.2 617.6 264.6C621.1 267.0 627.9 268.1 635.2 268.1C642.6 268.1 655.2 266.7 661.7 264.6C668.2 262.6 672.0 257.3 674.0 255.8" stroke-width="2.0" stroke-opacity="0.72"/>
<path d="M621.0 241.7C624.8 241.1 637.2 238.8 644.0 238.2C650.8 237.6 658.8 238.2 661.7 238.2" stroke-width="1.6" stroke-opacity="0.72"/>
<path d="M608.8 227.6C610.3 228.2 615.6 228.7 617.6 231.0C619.6 233.3 620.4 239.9 621.0 241.7" stroke-width="1.4" stroke-opacity="0.72"/>
<path d="M652.9 238.2C653.2 240.2 653.1 247.6 654.6 250.5C656.1 253.4 660.5 254.9 661.7 255.8" stroke-width="1.5" stroke-opacity="0.72"/>
<path d="M635.2 278.7C640.5 279.9 658.2 283.9 667.0 285.7C675.8 287.5 684.6 288.7 688.1 289.3" stroke-width="1.5" stroke-opacity="0.72"/>
<path d="M617.6 180.0C618.2 181.8 618.1 187.7 621.0 190.6C623.9 193.5 629.9 196.7 635.2 197.6C640.5 198.5 647.6 197.7 652.9 195.9C658.2 194.1 664.6 188.5 667.0 187.0" stroke-width="1.8" stroke-opacity="0.72"/>
<path d="M670.5 220.5C669.9 222.6 666.4 228.8 667.0 232.9C667.6 237.0 670.5 242.3 674.0 245.2C677.5 248.1 684.0 248.4 688.1 250.5C692.2 252.6 695.8 255.2 698.7 257.5C701.6 259.9 703.4 262.8 705.7 264.6C708.1 266.4 711.6 267.5 712.8 268.1" stroke-width="1.9" stroke-opacity="0.72"/>
<path d="M674.0 218.8C676.4 218.5 684.3 215.5 688.1 217.0C691.9 218.5 694.2 222.6 696.9 227.6C699.5 232.6 701.6 242.3 704.0 247.0C706.4 251.7 707.8 253.2 711.0 255.8C714.2 258.4 720.1 260.2 723.3 262.8C726.5 265.4 729.2 270.1 730.4 271.6" stroke-width="1.9" stroke-opacity="0.72"/>
<path d="M658.0 271.6C660.1 270.1 665.5 265.2 670.5 262.8C675.5 260.4 682.2 257.8 688.1 257.5C694.0 257.2 700.4 260.1 705.7 261.0C711.0 261.9 717.4 262.5 719.8 262.8" stroke-width="1.9" stroke-opacity="0.72"/>
<path d="M658.0 273.4C660.7 273.7 667.2 276.1 674.0 275.2C680.8 274.3 692.0 270.2 698.7 268.1C705.5 266.0 711.9 263.7 714.5 262.8" stroke-width="1.6" stroke-opacity="0.72"/>
<path d="M679.3 284.0C683.7 283.1 695.4 279.4 705.7 278.7C716.1 277.9 731.0 277.8 741.4 279.5C751.8 281.2 759.4 284.2 768.0 288.8C776.6 293.4 785.2 300.4 792.8 307.3C800.3 314.2 808.2 323.5 813.3 330.0C818.4 336.5 820.2 341.9 823.6 346.3C827.0 350.7 830.1 352.2 833.9 356.6C837.7 361.1 847.6 370.1 846.2 373.0C844.8 375.9 829.1 373.8 825.7 374.0" stroke-width="2.0" stroke-opacity="0.72"/>
<path d="M690.0 350.4C692.7 352.5 699.6 358.7 706.4 362.8C713.2 366.9 721.7 371.9 731.0 375.0C740.3 378.1 751.7 380.6 762.0 381.3C772.3 382.0 783.2 380.6 792.8 379.2C802.4 377.8 814.0 373.9 819.5 373.0C825.0 372.1 824.7 373.8 825.7 374.0" stroke-width="2.2" stroke-opacity="0.72"/>
<path d="M716.7 280.6C717.4 284.7 721.1 296.6 720.8 305.2C720.5 313.8 718.1 323.4 714.7 332.0C711.3 340.6 702.7 352.5 700.3 356.6" stroke-width="1.5" stroke-opacity="0.72"/>
<path d="M751.7 284.7C752.4 289.1 756.1 301.8 755.8 311.4C755.4 321.0 754.1 332.9 749.6 342.2C745.1 351.5 732.4 362.9 729.0 367.0" stroke-width="1.5" stroke-opacity="0.72"/>
<path d="M784.6 303.0C785.6 306.8 790.7 317.6 790.7 325.8C790.7 334.1 788.4 344.0 784.6 352.5C780.8 361.0 770.8 372.9 768.0 377.0" stroke-width="1.5" stroke-opacity="0.72"/>
<path d="M811.3 330.0C812.3 332.7 817.1 340.5 817.4 346.3C817.7 352.1 815.4 359.7 813.3 364.8C811.2 369.9 806.4 375.0 805.0 377.0" stroke-width="1.4" stroke-opacity="0.72"/>
<path d="M620.5 324.4C616.1 327.0 601.4 333.6 594.0 339.8C586.6 346.1 581.2 354.5 576.4 361.9C571.6 369.2 567.6 376.6 565.4 383.9C563.2 391.2 562.5 399.3 563.2 405.9C563.9 412.5 566.9 418.4 569.8 423.5C572.7 428.6 576.0 433.0 580.8 436.7C585.6 440.4 593.0 442.6 598.5 445.5C604.0 448.4 609.5 451.1 613.9 454.4C618.3 457.7 623.1 463.6 624.9 465.4" stroke-width="1.9" stroke-opacity="0.72"/>
<path d="M626.7 317.3C625.0 319.2 620.6 325.3 616.4 329.0C612.2 332.7 606.1 336.1 601.7 339.3C597.3 342.5 592.0 346.6 590.0 348.0" stroke-width="1.8" stroke-opacity="0.72"/>
<path d="M604.7 339.3C606.2 340.8 611.0 344.6 613.5 348.0C616.0 351.4 618.4 358.0 619.4 360.0" stroke-width="1.5" stroke-opacity="0.72"/>
<path d="M648.8 293.8C651.7 293.6 661.0 291.6 666.4 292.3C671.8 293.0 677.1 295.2 681.0 298.2C684.9 301.1 688.2 305.6 689.9 310.0C691.6 314.4 691.6 319.2 691.4 324.6C691.1 330.0 688.8 333.9 688.4 342.3C688.0 350.7 689.9 365.1 688.8 375.0C687.7 384.9 684.6 394.9 682.0 401.5C679.4 408.1 678.0 411.0 673.3 414.7C668.5 418.4 656.8 422.0 653.5 423.5" stroke-width="2.0" stroke-opacity="0.72"/>
<path d="M634.0 315.8C636.0 315.8 642.8 317.3 645.8 315.8C648.8 314.3 649.2 309.9 651.7 307.0C654.2 304.1 657.1 300.4 660.5 298.2C663.9 296.0 670.3 294.5 672.3 293.8" stroke-width="1.5" stroke-opacity="0.72"/>
<path d="M644.3 318.8C643.8 321.2 642.4 329.5 641.4 333.4C640.4 337.3 639.0 340.8 638.5 342.3" stroke-width="1.4" stroke-opacity="0.72"/>
<path d="M628.0 286.4C629.8 286.7 635.0 286.5 638.5 288.0C642.0 289.5 647.6 293.1 648.8 295.3C650.0 297.5 648.3 300.3 645.8 301.0C643.3 301.7 636.7 300.9 634.0 299.7C631.3 298.5 630.4 294.8 629.7 293.8" stroke-width="1.5" stroke-opacity="0.72"/>
<path d="M638.5 354.0C641.4 354.0 649.4 353.5 656.0 354.0C662.6 354.5 674.3 356.5 678.0 357.0" stroke-width="1.5" stroke-opacity="0.72"/>
<path d="M583.0 357.4C586.0 359.6 595.6 364.8 600.7 370.7C605.9 376.6 611.7 389.0 613.9 392.7" stroke-width="1.4" stroke-opacity="0.72"/>
<path d="M602.9 342.0C605.1 343.8 612.3 348.2 616.0 353.0C619.7 357.8 623.4 367.8 624.9 370.7" stroke-width="1.4" stroke-opacity="0.72"/>
<path d="M563.2 392.7C565.4 395.2 571.3 404.7 576.4 408.0C581.5 411.3 587.4 412.5 594.0 412.5C600.6 412.5 610.5 409.5 616.0 408.0C621.5 406.5 625.2 404.4 627.0 403.7" stroke-width="1.6" stroke-opacity="0.72"/>
<path d="M572.0 390.5C573.8 391.6 580.1 393.3 583.0 397.0C585.9 400.7 590.0 406.6 589.6 412.5C589.2 418.4 584.1 430.1 580.8 432.3C577.5 434.5 571.6 426.8 569.8 425.7" stroke-width="1.5" stroke-opacity="0.72"/>
<path d="M568.2 382.2C567.7 385.1 564.9 393.9 564.9 399.8C564.9 405.7 565.8 411.9 568.2 417.4C570.6 422.9 577.4 430.2 579.2 432.8" stroke-width="1.4" stroke-opacity="0.58"/>
<path d="M590.2 408.6C593.5 409.3 606.0 410.1 610.0 413.0C614.0 415.9 614.8 422.1 614.4 426.2C614.0 430.3 611.5 434.8 607.8 437.4C604.1 440.0 595.0 440.9 592.4 441.6" stroke-width="1.5" stroke-opacity="0.72"/>
<path d="M566.0 402.0C567.0 404.2 569.5 411.2 572.0 415.0C574.5 418.8 579.5 423.3 581.0 425.0" stroke-width="1.2" stroke-opacity="0.50"/>
<path d="M633.7 353.0C638.1 353.0 651.5 351.2 660.0 353.0C668.5 354.8 680.3 362.2 684.4 364.0" stroke-width="1.4" stroke-opacity="0.72"/>
<path d="M629.3 383.9C633.7 383.5 647.2 380.2 655.7 381.7C664.2 383.2 676.0 390.9 680.0 392.7" stroke-width="1.5" stroke-opacity="0.72"/>
<path d="M629.3 414.7C631.5 414.3 638.8 411.0 642.5 412.5C646.2 414.0 650.2 419.1 651.3 423.5C652.4 427.9 651.2 437.2 649.0 439.0C646.8 440.8 640.9 437.1 638.0 434.5C635.1 431.9 632.6 425.3 631.5 423.5" stroke-width="1.5" stroke-opacity="0.72"/>
<path d="M673.3 417.0C674.4 419.9 679.6 429.4 680.0 434.5C680.4 439.6 676.2 445.5 675.5 447.7" stroke-width="1.4" stroke-opacity="0.72"/>
<path d="M653.5 421.3C656.8 420.2 667.0 414.7 673.3 414.7C679.5 414.7 686.5 418.0 691.0 421.3C695.5 424.6 696.5 430.5 700.0 434.7C703.5 438.9 707.0 442.9 711.7 446.4C716.4 449.9 723.5 453.8 728.2 455.8C732.9 457.8 737.2 455.8 739.9 458.2C742.6 460.6 744.2 466.9 744.6 470.0C745.0 473.1 741.9 473.1 742.3 477.0C742.7 480.9 744.7 488.3 747.0 493.4C749.3 498.5 752.4 503.2 756.3 507.5C760.2 511.8 766.1 515.3 770.4 519.2C774.7 523.1 777.5 526.3 782.2 531.0C786.9 535.7 795.1 541.9 798.6 547.4C802.1 552.9 803.3 559.9 803.3 563.8C803.3 567.7 802.1 569.2 798.6 570.8C795.1 572.4 786.9 572.4 782.2 573.2C777.5 574.0 772.4 575.1 770.4 575.5" stroke-width="1.8" stroke-opacity="0.72"/>
<path d="M633.7 436.7C636.6 437.8 643.2 440.8 651.3 443.3C659.3 445.9 673.9 449.5 682.0 452.0C690.1 454.5 694.7 455.6 700.0 458.2C705.3 460.8 709.7 464.5 714.0 467.6C718.3 470.7 723.8 474.7 725.8 477.0C727.8 479.3 725.0 476.5 725.8 481.6C726.6 486.7 728.9 499.7 730.5 507.5C732.1 515.3 733.2 522.0 735.2 528.6C737.2 535.2 739.6 541.9 742.3 547.4C745.0 552.9 748.5 557.6 751.6 561.5C754.7 565.4 757.9 568.5 761.0 570.8C764.1 573.1 768.8 574.7 770.4 575.5" stroke-width="1.8" stroke-opacity="0.72"/>
<path d="M730.5 486.3C730.9 491.8 731.3 510.2 732.9 519.2C734.5 528.2 737.2 532.9 739.9 540.3C742.6 547.7 746.6 557.9 749.3 563.8C752.0 569.7 755.1 573.5 756.3 575.5" stroke-width="1.4" stroke-opacity="0.58"/>
<path d="M770.4 519.2C771.6 521.2 775.9 526.7 777.5 531.0C779.1 535.3 779.8 540.7 779.8 545.0C779.8 549.3 777.9 554.8 777.5 556.8" stroke-width="1.4" stroke-opacity="0.58"/>
<path d="M728.2 455.8C727.6 457.8 725.0 464.1 724.6 467.6C724.2 471.1 724.0 474.9 725.8 477.0C727.6 479.1 732.5 480.5 735.2 480.5C738.0 480.5 741.1 477.6 742.3 477.0" stroke-width="1.5" stroke-opacity="0.72"/>
<path d="M732.9 533.3C735.2 533.3 742.7 534.9 747.0 533.3C751.3 531.7 756.4 526.6 758.7 523.9C761.0 521.1 760.6 518.0 761.0 516.8" stroke-width="1.5" stroke-opacity="0.72"/>
<path d="M751.6 559.0C754.0 559.8 761.4 563.4 765.7 563.8C770.0 564.2 775.5 561.9 777.5 561.5" stroke-width="1.4" stroke-opacity="0.72"/>
<path d="M765.7 552.0C766.5 554.3 768.4 562.5 770.4 566.0C772.4 569.5 776.3 572.0 777.5 573.2" stroke-width="1.4" stroke-opacity="0.58"/>
<path d="M600.0 447.0C603.9 449.0 616.5 454.9 623.5 458.8C630.5 462.7 638.8 466.6 642.3 470.5C645.8 474.4 645.9 475.6 644.7 482.3C643.5 489.0 638.0 502.7 635.3 510.5C632.5 518.3 629.8 523.0 628.2 529.3C626.6 535.5 625.1 541.0 625.9 548.0C626.7 555.0 629.8 565.3 632.9 571.6C636.0 577.9 638.4 582.6 644.7 585.7C651.0 588.8 666.2 589.6 670.5 590.4" stroke-width="1.8" stroke-opacity="0.72"/>
<path d="M651.7 463.5C654.1 464.3 663.0 464.3 665.8 468.2C668.5 472.1 668.2 478.0 668.2 487.0C668.2 496.0 666.6 512.5 665.8 522.3C665.0 532.1 663.5 537.6 663.5 545.8C663.5 554.0 664.6 564.6 665.8 571.6C667.0 578.6 669.7 585.3 670.5 588.0" stroke-width="1.8" stroke-opacity="0.72"/>
<path d="M642.3 477.6C644.2 476.8 649.7 472.6 654.0 473.0C658.3 473.4 665.8 478.8 668.2 480.0" stroke-width="1.4" stroke-opacity="0.72"/>
<path d="M644.7 484.7L665.8 482.3" stroke-width="1.4" stroke-opacity="0.72"/>
<path d="M640.0 475.0C642.0 473.1 649.0 467.0 651.7 463.5C654.4 460.0 655.6 455.6 656.4 454.0" stroke-width="1.4" stroke-opacity="0.72"/>
<path d="M623.5 534.0C626.6 534.8 636.0 538.7 642.3 538.7C648.5 538.7 657.9 534.8 661.0 534.0" stroke-width="1.4" stroke-opacity="0.72"/>
<path d="M630.5 564.6C632.9 565.8 638.8 570.0 644.7 571.6C650.6 573.2 662.3 573.6 665.8 574.0" stroke-width="1.4" stroke-opacity="0.72"/>
<path d="M629.6 516.0C628.5 519.7 623.7 531.4 623.0 538.0C622.3 544.6 623.4 549.8 625.2 555.7C627.0 561.6 630.3 568.9 634.0 573.3C637.7 577.7 645.1 580.7 647.3 582.2" stroke-width="1.4" stroke-opacity="0.58"/>
<path d="M634.0 571.0C636.2 571.8 642.5 574.8 647.3 575.5C652.1 576.2 660.1 575.5 662.7 575.5" stroke-width="1.4" stroke-opacity="0.58"/>
<path d="M634.0 549.0L638.5 564.5" stroke-width="1.4" stroke-opacity="0.50"/>
<path d="M636.0 552.0L632.0 566.0" stroke-width="1.2" stroke-opacity="0.43"/>
<path d="M613.0 549.0L611.5 556.0" stroke-width="1.1" stroke-opacity="0.29"/>
<path d="M623.0 531.5C625.6 532.6 633.0 537.4 638.5 538.1C644.0 538.8 652.0 537.4 656.0 535.9C660.0 534.4 661.6 530.4 662.7 529.3" stroke-width="1.5" stroke-opacity="0.72"/>
<path d="M645.0 456.6C648.3 457.7 661.0 461.4 664.9 463.2C668.8 465.0 667.7 466.9 668.2 467.6" stroke-width="1.5" stroke-opacity="0.72"/>
</g></svg></div>
<div class="btn" style="left:1102px;top:70px;width:14px;height:14px"><i style="left:2px;top:3px;border-left:3px solid transparent;border-right:3px solid transparent;border-bottom:4px solid #fff"></i></div>
<div style="left:1102px;top:260px;width:14px;height:172px;background:#ababab;border:2px solid #595959;border-radius:3px"></div>
<div style="left:1101px;top:624px;width:16px;height:15px;background:#dedede;border-bottom-right-radius:3px"></div>
<div class="btn" style="left:1102px;top:609px;width:14px;height:14px"><i style="left:2px;top:4px;border-left:3px solid transparent;border-right:3px solid transparent;border-top:4px solid #fff"></i></div>
<div class="btn" style="left:176px;top:625px;width:14px;height:14px"><i style="left:3px;top:2px;border-top:3px solid transparent;border-bottom:3px solid transparent;border-right:4px solid #fff"></i></div>
<div style="left:446px;top:625px;width:345px;height:14px;background:#ababab;border:2px solid #595959;border-radius:3px"></div>
<div class="btn" style="left:1086px;top:625px;width:14px;height:14px"><i style="left:4px;top:2px;border-top:3px solid transparent;border-bottom:3px solid transparent;border-left:4px solid #fff"></i></div>

<!-- ============ STATUS / TAB ============ -->
<div style="left:175px;top:643px;width:148px;height:20px;background:#b9b9f6;border:1px solid #8c8ce0;border-radius:2px"></div>
<div style="left:177px;top:646px;width:13px;height:14px;background:#3a8a3a;border-radius:2px"></div><div style="left:179px;top:645px;width:14px;height:13px;border-radius:50%;background:radial-gradient(circle at 55% 40%,#f4f890,#b8e060 60%,#60a040)"></div><div style="left:178px;top:654px;width:13px;height:3px;background:#7a5030;transform:rotate(25deg)"></div>
<div class="t" style="left:194px;top:648px;font-size:10.5px">New Canvas.sai</div>
<div class="t" style="left:298px;top:648px;font-size:10.5px">24%</div>
<div class="t" style="left:920px;top:670px;font-size:10.1px;color:#222">Memory load: 39% (210MB used / 801MB reserved)</div>
<!-- ============ LEFT PANEL ============ -->
<!-- color wheel -->
<div style="left:9px;top:69px;width:155px;height:155px;border-radius:50%;background:#d6d6d6"></div>
<div style="left:10px;top:70px;width:153px;height:153px;border-radius:50%;background:conic-gradient(#ff0 0deg,#0f0 80deg,#0ff 135deg,#00f 180deg,#f0f 232deg,#f00 300deg,#ff0 360deg)"></div>
<div style="left:26px;top:86px;width:121px;height:121px;border-radius:50%;background:#d6d6d6"></div>
<div style="left:27px;top:87px;width:119px;height:119px;border-radius:50%;background:#f9f9f9"></div>
<div style="left:45px;top:105px;width:82px;height:82px;border:1px solid #d0d0d0;background:linear-gradient(to top,#000 0%,rgba(0,0,0,.6) 35%,rgba(0,0,0,.25) 65%,rgba(0,0,0,0) 100%),linear-gradient(to right,#fff,#f4a000)"></div>
<div style="left:62px;top:77px;width:9px;height:9px;border-radius:50%;border:2px solid #3a4a9a"></div>
<div style="left:41px;top:181px;width:10px;height:10px;border-radius:50%;border:2px solid #222;background:rgba(255,255,255,.3)"></div>
<!-- tools -->
<div class="ti" style="left:5px;top:231px"></div>
<div class="ti" style="left:26px;top:231px"></div>
<div class="ti" style="left:46px;top:231px"></div>
<div class="ti" style="left:67px;top:231px"></div>
<div class="ti" style="left:88px;top:231px"></div>
<div class="ti" style="left:5px;top:251px"></div>
<div class="ti" style="left:26px;top:251px"></div>
<div class="ti" style="left:46px;top:251px"></div>
<div class="ti" style="left:67px;top:251px"></div>
<div class="ti" style="left:88px;top:251px"></div>
<svg style="position:absolute;left:0;top:226px" width="172" height="48">
<rect x="8.5" y="7.5" width="12" height="12" fill="none" stroke="#222" stroke-width="1.2" stroke-dasharray="2 1.5"/>
<ellipse cx="34" cy="11" rx="7" ry="3.5" fill="none" stroke="#222" stroke-width="1.2" stroke-dasharray="2 1.5"/>
<path d="M41 11C43 14 36 15 38 19L40 21" fill="none" stroke="#222" stroke-width="1.1"/>
<path d="M49 21L58 12" stroke="#333" stroke-width="2.5"/>
<path d="M58 9V6M61 12H64M60 10L62 8M56 8L55 6" stroke="#333" stroke-width="0.8"/>
<path d="M15 29V43M8 36H22M15 29L12.5 31.5M15 29L17.5 31.5M15 43L12.5 40.5M15 43L17.5 40.5M8 36L10.5 33.5M8 36L10.5 38.5M22 36L19.5 33.5M22 36L19.5 38.5" stroke="#111" stroke-width="1.4" fill="none"/>
<circle cx="33" cy="34" r="4.5" fill="none" stroke="#111" stroke-width="1.5"/><path d="M36 37L41 42" stroke="#111" stroke-width="2"/>
<path d="M52 42L51 40A6 6 0 1 1 61 40L60 42" fill="none" stroke="#111" stroke-width="2"/><path d="M49 42H54M58 42H63" stroke="#111" stroke-width="1.5"/>
<path d="M73 36C71 33 70 31 72 31L75 34L73 28C73 26 75 26 76 28L78 31L78 27C78 25 80 25 81 27L82 31L83 29C84 28 85 29 85 30L85 37C85 41 82 43 79 43C76 43 74 39 73 36Z" fill="#fff" stroke="#222" stroke-width="1.1"/>
<path d="M92 42L100 34" stroke="#333" stroke-width="1.5"/><path d="M98 32L101 29C102 28 104 28 105 29C106 30 106 32 105 33L102 36Z" fill="#111"/>
</svg>
<div style="left:127px;top:228px;width:27px;height:26px;background:#000;border:2px solid #b4b4b4;outline:1px solid #888;outline-offset:-1px;z-index:2"></div>
<div style="left:142px;top:243px;width:27px;height:26px;background:#fff;border:1px solid #b8b8b8"></div>
<div style="left:127px;top:256px;width:14px;height:14px;background:#f1f1f1;border:1px solid #e0e0e0"><i style="left:2px;top:2px;width:8px;height:8px;background:linear-gradient(90deg,#aaa 50%,#eee 50%);"></i><i style="left:2px;top:6px;width:8px;height:4px;background:linear-gradient(90deg,#eee 50%,#888 50%)"></i></div>
<svg style="position:absolute;left:156px;top:229px" width="12" height="12"><path d="M2 3C5 1 8 2 9 6" fill="none" stroke="#111" stroke-width="1.3"/><path d="M0 4L3 1.5L3.5 5Z M7 6H11L9 10Z" fill="#111"/></svg>

<!-- brush grid -->
<div style="left:3px;top:275px;width:167px;height:181px;border:1px solid #cfcfcf;background:#f3f3f3;border-radius:2px"></div>
<div class="cell" style="left:4px;top:276px"><span>Sketch</span></div>
<div class="cell" style="left:42px;top:276px"><span>Pen</span></div>
<div class="cell" style="left:80px;top:276px"><span>Color</span></div>
<div class="cell" style="left:118px;top:276px"><span>Pixel</span></div>
<div class="cell" style="left:4px;top:306px"><span>Eraser</span></div>
<div class="cell" style="left:42px;top:306px"><span>Bucket</span></div>
<div class="cell" style="left:80px;top:306px"><span>Select</span></div>
<div class="cell" style="left:118px;top:306px"><span>Deselect</span></div>
<div class="cell" style="left:4px;top:336px;background:#dcdcf8;border:1px solid #8a8ae0"><span style="left:2px;top:2px">Blur</span></div>
<div class="cell" style="left:42px;top:336px"><span>AirBrush</span></div>
<div class="cell" style="left:80px;top:336px"><span>Marker</span></div>
<div class="cell" style="left:118px;top:336px"><span>Brush</span></div>
<div class="cell" style="left:4px;top:366px"><span>Pencil</span></div>
<div class="cell" style="left:42px;top:366px"><span>Sis Pen</span></div>
<div class="cell ec" style="left:80px;top:366px"></div>
<div class="cell" style="left:118px;top:366px"><span>Eraser</span></div>
<div class="cell ec" style="left:4px;top:396px"></div>
<div class="cell" style="left:42px;top:396px"><span>Hair</span></div>
<div class="cell ec" style="left:80px;top:396px"></div>
<div class="cell" style="left:118px;top:396px"><span>Marker</span></div>
<div class="cell ec" style="left:4px;top:426px;height:29px"></div>
<div class="cell ec" style="left:42px;top:426px;height:29px"></div>
<div class="cell" style="left:80px;top:426px;height:29px"><span>Marker</span></div>
<div class="cell" style="left:118px;top:426px;height:29px"><span>Marker</span></div>
<div style="left:155px;top:276px;width:14px;height:179px;background:#f0f0f0"></div>
<div class="btn" style="left:155px;top:277px;width:14px;height:14px"><i style="left:2px;top:3px;border-left:3px solid transparent;border-right:3px solid transparent;border-bottom:4px solid #fff"></i></div>
<div style="left:155px;top:292px;width:14px;height:53px;background:#ababab;border:2px solid #595959;border-radius:3px"></div>
<div class="btn" style="left:155px;top:440px;width:14px;height:14px"><i style="left:2px;top:4px;border-left:3px solid transparent;border-right:3px solid transparent;border-top:4px solid #fff"></i></div>
<svg style="position:absolute;left:0;top:276px" width="156" height="180"><g transform="translate(0 0)"><path d="M21 27.5L23 22.5L33.5 12L37 15.5L26.5 26Z" fill="#6a6a6a" stroke="#333" stroke-width="0.9" stroke-linejoin="round"/><path d="M24.5 23.5L34.5 13.5" stroke="#aaa" stroke-width="1"/><path d="M21 27.5L23 22.5L26.5 26Z" fill="#e8e8e8" stroke="#444" stroke-width="0.7"/><path d="M21 27.5L22 25.5L23 26.5Z" fill="#222"/></g><g transform="translate(38 0)"><path d="M21 27.5L23 22.5L33.5 12L37 15.5L26.5 26Z" fill="#6a6a6a" stroke="#333" stroke-width="0.9" stroke-linejoin="round"/><path d="M24.5 23.5L34.5 13.5" stroke="#aaa" stroke-width="1"/><path d="M21 27.5L23 22.5L26.5 26Z" fill="#e8e8e8" stroke="#444" stroke-width="0.7"/><path d="M21 27.5L22 25.5L23 26.5Z" fill="#222"/></g><g transform="translate(76 0)"><path d="M21 27.5L23 22.5L33.5 12L37 15.5L26.5 26Z" fill="#6a6a6a" stroke="#333" stroke-width="0.9" stroke-linejoin="round"/><path d="M24.5 23.5L34.5 13.5" stroke="#aaa" stroke-width="1"/><path d="M21 27.5L23 22.5L26.5 26Z" fill="#e8e8e8" stroke="#444" stroke-width="0.7"/><path d="M21 27.5L22 25.5L23 26.5Z" fill="#222"/></g><g transform="translate(114 0)"><path d="M21 27.5L23 22L33.5 12C34.5 11 35.5 11 36.5 12C37.5 13 37.5 14 36.5 15L26.5 25.5Z" fill="#fff" stroke="#222" stroke-width="1"/><path d="M23 22L26.5 25.5" stroke="#222" stroke-width="0.8"/><path d="M21 27.5L22 24.5L24 26.5Z" fill="#111"/></g><g transform="translate(0 30) rotate(-45 28 21)"><rect x="21" y="17" width="15" height="8" rx="2" fill="#fff" stroke="#333" stroke-width="1"/><rect x="26" y="17" width="10" height="8" rx="1.5" fill="#777" stroke="#333" stroke-width="1"/><path d="M27 20H35" stroke="#aaa" stroke-width="1"/></g><g transform="translate(38 30)"><path d="M24 17L31 11L37 18L30 25Z" fill="#666" stroke="#222" stroke-width="1"/><path d="M24 17L30 25" stroke="#ccc" stroke-width="1"/><path d="M31 11C33 9 36 11 37 14" fill="none" stroke="#222" stroke-width="1"/><path d="M24 18C21 20 21 24 21 27H26" fill="none" stroke="#333" stroke-width="1"/></g><g transform="translate(76 30)"><rect x="19.5" y="13.5" width="13" height="13" rx="2" fill="none" stroke="#222" stroke-width="1" stroke-dasharray="2 1.5"/><path d="M22 16.5H25M22 18H24" stroke="#444" stroke-width="1"/><path d="M22 28L23.5 23.5L32 15L34.5 17.5L26 26Z" fill="#fff" stroke="#222" stroke-width="1"/></g><g transform="translate(114 30)"><rect x="19.5" y="13.5" width="13" height="13" rx="2" fill="none" stroke="#222" stroke-width="1" stroke-dasharray="2 1.5"/><path d="M22 16.5H25M22 18H24" stroke="#444" stroke-width="1"/><g transform="rotate(-45 29 22)"><rect x="22" y="18.5" width="14" height="7" rx="1.5" fill="#fff" stroke="#333" stroke-width="0.9"/><rect x="27" y="18.5" width="9" height="7" rx="1" fill="#777" stroke="#333" stroke-width="0.9"/></g></g><g transform="translate(-2 60)"><path d="M19.5 28L21 25.5L24 24L34.5 13.5C35.5 12.5 36.5 12.5 37 13C37.5 13.5 37.5 14.5 36.5 15.5L26 26L25 28Z" fill="#111"/><path d="M23.5 24.5L26 27" stroke="#ddd" stroke-width="1"/><path d="M34 19C32 22 31 24 32 26C33 27.5 36 27.5 37 26C38 24 36 22 34 19Z" fill="#ccc" stroke="#777" stroke-width="0.8"/></g><g transform="translate(38 60)"><path d="M20 25L35 14" stroke="#111" stroke-width="2"/><path d="M22 21L27 24L32 21L37 27" fill="none" stroke="#111" stroke-width="1.3"/><path d="M19.5 20L23 19L24 23L21 25Z" fill="#444"/><path d="M25 20L27 17M28 21L30 19" stroke="#333" stroke-width="1"/></g><g transform="translate(76 60)"><path d="M21 27.5L23 22L33.5 12C34.5 11 35.5 11 36.5 12C37.5 13 37.5 14 36.5 15L26.5 25.5Z" fill="#fff" stroke="#222" stroke-width="1"/><path d="M23 22L26.5 25.5" stroke="#222" stroke-width="0.8"/><path d="M21 27.5L22 24.5L24 26.5Z" fill="#111"/></g><g transform="translate(114 60)"><path d="M19.5 28L21 25.5L24 24L34.5 13.5C35.5 12.5 36.5 12.5 37 13C37.5 13.5 37.5 14.5 36.5 15.5L26 26L25 28Z" fill="#111"/><path d="M23.5 24.5L26 27" stroke="#ddd" stroke-width="1"/></g><g transform="translate(0 90)"><path d="M21 27.5L23 22.5L33.5 12L37 15.5L26.5 26Z" fill="#6a6a6a" stroke="#333" stroke-width="0.9" stroke-linejoin="round"/><path d="M24.5 23.5L34.5 13.5" stroke="#aaa" stroke-width="1"/><path d="M21 27.5L23 22.5L26.5 26Z" fill="#e8e8e8" stroke="#444" stroke-width="0.7"/><path d="M21 27.5L22 25.5L23 26.5Z" fill="#222"/></g><g transform="translate(38 90)"><path d="M21 27.5L23 22.5L33.5 12L37 15.5L26.5 26Z" fill="#6a6a6a" stroke="#333" stroke-width="0.9" stroke-linejoin="round"/><path d="M24.5 23.5L34.5 13.5" stroke="#aaa" stroke-width="1"/><path d="M21 27.5L23 22.5L26.5 26Z" fill="#e8e8e8" stroke="#444" stroke-width="0.7"/><path d="M21 27.5L22 25.5L23 26.5Z" fill="#222"/></g><g transform="translate(114 90) rotate(-45 28 21)"><rect x="21" y="17" width="15" height="8" rx="2" fill="#fff" stroke="#333" stroke-width="1"/><rect x="26" y="17" width="10" height="8" rx="1.5" fill="#777" stroke="#333" stroke-width="1"/><path d="M27 20H35" stroke="#aaa" stroke-width="1"/></g><g transform="translate(38 120)"><path d="M20 25L35 14" stroke="#111" stroke-width="2"/><path d="M22 21L27 24L32 21L37 27" fill="none" stroke="#111" stroke-width="1.3"/><path d="M19.5 20L23 19L24 23L21 25Z" fill="#444"/><path d="M25 20L27 17M28 21L30 19" stroke="#333" stroke-width="1"/></g><g transform="translate(114 120)"><path d="M21 27.5L23 22L33.5 12C34.5 11 35.5 11 36.5 12C37.5 13 37.5 14 36.5 15L26.5 25.5Z" fill="#fff" stroke="#222" stroke-width="1"/><path d="M23 22L26.5 25.5" stroke="#222" stroke-width="0.8"/><path d="M21 27.5L22 24.5L24 26.5Z" fill="#111"/></g><g transform="translate(76 150)"><path d="M21 27.5L23 22L33.5 12C34.5 11 35.5 11 36.5 12C37.5 13 37.5 14 36.5 15L26.5 25.5Z" fill="#fff" stroke="#222" stroke-width="1"/><path d="M23 22L26.5 25.5" stroke="#222" stroke-width="0.8"/><path d="M21 27.5L22 24.5L24 26.5Z" fill="#111"/></g><g transform="translate(114 150)"><path d="M21 27.5L23 22L33.5 12C34.5 11 35.5 11 36.5 12C37.5 13 37.5 14 36.5 15L26.5 25.5Z" fill="#fff" stroke="#222" stroke-width="1"/><path d="M23 22L26.5 25.5" stroke="#222" stroke-width="0.8"/><path d="M21 27.5L22 24.5L24 26.5Z" fill="#111"/></g></svg>
<div style="left:80px;top:459px;width:13px;height:2px;background:#8a8a8a;border-radius:1px"></div>

<!-- brush settings -->
<div class="box" style="left:3px;top:465px;width:92px;height:17px"></div>
<div class="t lbl" style="left:8px;top:469px">Normal</div>
<div class="dd" style="left:80px;top:466px"></div>
<div class="box" style="left:100px;top:465px;width:70px;height:17px"></div>
<div style="left:119px;top:466px;width:16px;height:15px;background:#d8d8f8;border:1px solid #8080d8"></div>
<svg style="position:absolute;left:100px;top:465px" width="70" height="17"><path d="M4 13L10 5L16 13Z" fill="#111"/><path d="M21 13C21 6 23 5 27 5C31 5 33 6 33 13Z" fill="#111"/><path d="M37 13L39 6H48L50 13Z" fill="#111"/><rect x="54" y="6" width="13" height="7" fill="#111"/></svg>
<div class="t lbl" style="left:2px;top:492px">Size</div>
<div class="dd" style="left:59px;top:488px;width:12px;height:13px"></div>
<div class="bar" style="left:72px;top:488px;width:98px"><i style="right:1px;background:#c2c2c2"></i><b style="left:5px;right:auto;font-size:9px;color:#333">x 5.0</b><b>500.0</b></div>
<div class="t lbl" style="left:2px;top:509px">Min Size</div>
<div class="bar" style="left:72px;top:505px;width:79px"><i style="width:12px"></i><b>15%</b></div>
<div class="t lbl" style="left:2px;top:529px">Density</div>
<div class="bar" style="left:72px;top:525px;width:98px"><i style="width:66px"></i><b>69</b></div>
<div class="box" style="left:3px;top:547px;width:112px;height:17px"></div>
<div class="t lbl" style="left:8px;top:551px">(simple circle)</div>
<div class="dd" style="left:99px;top:548px"></div>
<div class="bar" style="left:119px;top:547px;width:51px;height:17px;border-color:#e2e2e2"><i style="width:16px;background:#f0f0f0"></i><b style="color:#c8c8c8;top:2px">50</b></div>
<div class="box" style="left:3px;top:567px;width:112px;height:17px"></div>
<div class="t lbl" style="left:8px;top:571px;letter-spacing:0.4px">(no texture)</div>
<div class="dd" style="left:99px;top:568px"></div>
<div class="bar" style="left:119px;top:567px;width:51px;height:17px;border-color:#e2e2e2"><i style="width:0"></i><b style="color:#c8c8c8;top:2px">95</b></div>
<div class="t lbl" style="left:2px;top:595px">Blending</div>
<div class="bar" style="left:72px;top:591px;width:98px"><i style="width:41px"></i><b>43</b></div>
<div class="t lbl" style="left:2px;top:612px">Dilution</div>
<div class="bar" style="left:72px;top:608px;width:98px"><i style="width:72px"></i><b>76</b></div>
<div class="t lbl" style="left:2px;top:629px">Persistence</div>
<div class="bar" style="left:72px;top:625px;width:98px"><i style="right:1px"></i><b>100</b></div>
<div style="left:72px;top:641px;width:13px;height:13px;border:1px solid #8a8a8a;background:#fff;border-radius:2px"></div>
<div class="t lbl" style="left:87px;top:643px">Keep Opacity</div>
<div class="bar" style="left:72px;top:659px;width:79px;height:6px"><i style="width:38px"></i></div>
<!-- ============ RIGHT PANEL ============ -->
<div style="left:1126px;top:48px;width:151px;height:78px;border:1px solid #c8c8c8;background:#b0b0b0;border-radius:2px"></div>
<div style="left:1166px;top:50px;width:72px;height:75px;background:#fff"></div>
<svg style="position:absolute;left:1126px;top:48px" width="152" height="78"><g fill="none" stroke="#a09480" stroke-opacity="0.45" stroke-width="0.60"><path d="M58.7 14.4C59 14.1 59.8 13.2 60.4 12.4C61 11.7 61.4 10.3 62.2 9.8C63 9.4 64.2 9.6 65.3 9.7C66.4 9.7 67.8 9.6 68.5 9.9C69.3 10.3 69.3 11.1 69.6 11.7C69.9 12.3 70.2 13.1 70.3 13.3"/><path d="M58.8 14.6C59.2 14.4 60.5 14.1 61.3 13.7C62.1 13.3 62.9 12.7 63.7 12.2C64.5 11.8 65.2 11.5 66 11.3C66.8 11.1 67.8 11.1 68.5 11.0C69.3 10.9 70 10.8 70.3 10.8"/><path d="M59.4 18.0C59.5 17.5 60 15.9 60.4 14.9C60.9 13.9 61.5 12.8 61.9 12.1C62.3 11.3 62.6 10.7 62.8 10.5"/><path d="M59.7 17.8C60 17.2 61 15.6 61.5 14.4C62 13.2 62.6 11.1 62.8 10.5"/><path d="M70 9.2C70.2 9.4 70.8 10 71.3 10.4C71.8 10.8 72.8 11.2 73.3 11.7C73.8 12.1 74.1 12.6 74.4 13.1C74.6 13.6 74.7 14.4 74.7 14.9C74.8 15.4 74.6 15.8 74.6 16.0"/><path d="M74 10.0C74 10.3 73.9 11.2 74.1 11.7C74.2 12.3 75 13 75.1 13.5C75.2 14.1 74.7 15 74.6 15.3"/><path d="M77.1 11.7C76.9 12 76.1 12.6 75.9 13.1C75.6 13.6 75.6 14.3 75.5 14.7C75.4 15.2 75.2 15.6 75.2 15.8"/><path d="M65.5 13.5C65.8 13.4 66.7 13 67.1 12.8C67.6 12.6 67.8 12.4 68.2 12.2C68.6 12.1 69.1 12.1 69.3 12.0"/><path d="M65.6 11.5C65.9 11.5 66.9 11.8 67.4 11.9C67.9 11.9 68.2 11.7 68.6 11.7C69.1 11.8 69.8 12.2 70 12.3"/><path d="M69.2 10.4C69.4 10.8 69.9 12.1 70.3 12.8C70.6 13.6 71.2 14.6 71.4 15.0"/><path d="M71.1 14.2C71.2 14.2 71.7 14.3 71.9 14.5C72.1 14.6 72.4 15.1 72.5 15.3"/><path d="M68 13.8C67.7 13.9 66.9 14.3 66.6 14.6C66.3 14.9 66 15.4 65.9 15.8C65.8 16.2 65.8 16.6 65.8 17.0C65.9 17.4 66 18 66.3 18.3C66.6 18.6 67.1 18.9 67.7 19.0C68.2 19.1 68.9 19.1 69.5 19.0C70.1 18.9 70.6 19 71.3 18.7C72 18.4 73.4 17.5 73.8 17.2"/><path d="M67.7 14.4C67.9 14.2 68.6 13.5 69 13.5C69.3 13.4 69.8 13.6 69.9 13.8C69.9 14.1 69.6 14.7 69.3 14.9C69.1 15.1 68.4 14.9 68.2 14.9"/><path d="M68.6 9.9C68.7 10.2 69.2 11.1 69.5 11.7C69.8 12.2 70.1 13 70.2 13.3"/><path d="M73.3 17.0C73.7 17 75 16.5 75.8 16.5C76.6 16.5 77.4 16.8 78 17.0C78.6 17.3 79.2 17.9 79.4 18.1"/><path d="M69 18.2C69.1 18.2 69.3 18.6 69.5 18.6C69.7 18.7 70.1 18.4 70.2 18.4"/><path d="M70.8 14.0C71 14 71.8 13.9 72 14.2C72.3 14.5 72.3 15.1 72.2 15.6C72.1 16.1 71.7 16.8 71.6 17.0"/><path d="M68.9 15.1C69.1 15 69.6 14.5 70 14.3C70.4 14.1 70.9 14 71.1 13.9"/><path d="M73.3 16.7C73.6 16.6 74.6 16.3 75.3 16.1C75.9 15.9 76.5 15.6 77.1 15.5C77.6 15.5 78.4 15.7 78.7 15.7"/><path d="M77.1 16.3C77.5 16.4 78.9 16.5 79.5 16.7C80.1 17 80.3 17.2 80.6 17.7C81 18.2 81.3 19.3 81.5 19.9C81.6 20.5 81.5 20.9 81.5 21.1"/><path d="M79.9 18.7C80.1 19 80.8 19.8 81.1 20.3C81.3 20.7 81.2 21.3 81.3 21.5"/><path d="M68.5 19.5C69.2 19.3 71.6 18.7 72.8 18.3C74 18 74.9 17.6 75.7 17.4C76.5 17.1 77.3 17 77.6 16.9"/><path d="M74.7 17.4C75.2 17.4 76.7 17.4 77.6 17.6C78.5 17.8 79.4 18.3 80 18.8C80.6 19.3 81.3 20 81.5 20.7C81.7 21.4 81.5 22.2 81.2 22.9C81 23.5 80.4 24.3 80 24.8C79.6 25.2 78.8 25.4 78.6 25.5"/><path d="M76.7 19.3C77 19.6 78.2 20.4 78.6 21.0C79 21.6 79.1 22.3 79.1 22.9C79.1 23.4 78.7 24.3 78.6 24.5"/><path d="M79.5 19.7C79.7 20.1 80.4 20.9 80.5 21.7C80.6 22.4 80.1 23.7 80 24.1"/><path d="M66.8 25.2C67.4 24.7 69.2 22.9 70.4 22.1C71.6 21.4 73 20.9 74 20.5C75 20 76.2 19.7 76.7 19.5"/><path d="M68 24.1C68.6 23.8 70.4 22.8 71.6 22.4C72.8 21.9 74.6 21.6 75.2 21.4"/><path d="M74.9 17.8C75.2 17.8 76.2 17.6 76.8 17.7C77.4 17.8 78.2 18.2 78.5 18.2"/><path d="M77.5 18.2C77.8 18.4 78.8 18.7 79.3 19.1C79.8 19.4 80.2 20.2 80.4 20.4"/><path d="M68.6 19.2C69 19 70.1 18.7 70.8 18.3C71.6 17.9 72.3 17.4 73.1 17.1C74 16.7 75 16.5 75.9 16.3C76.8 16.1 78.1 15.9 78.6 15.8"/><path d="M77.1 17.8C77.4 18 78.3 18.7 78.7 19.2C79.1 19.7 79.2 20.3 79.5 20.8C79.7 21.4 80 22 80.2 22.6C80.4 23.2 80.6 23.7 80.6 24.2C80.5 24.7 79.9 25.4 79.8 25.7"/><path d="M77.3 19.9C77.5 20.2 78.1 20.8 78.4 21.4C78.6 21.9 78.7 22.5 78.7 23.1C78.7 23.7 78.4 24.6 78.4 24.9"/><path d="M68.6 21.9C69.2 21.6 70.9 20.5 71.9 20.1C72.9 19.7 74.2 19.5 74.6 19.4"/><path d="M72.6 23.5C72.6 23.3 72.5 22.6 72.8 22.2C73 21.9 73.6 21.6 74.1 21.5C74.5 21.4 75 21.5 75.3 21.7C75.7 21.9 76 22.4 76.2 22.8C76.5 23.2 76.6 23.7 76.9 24.2C77.2 24.7 77.8 25.4 78 25.7"/><path d="M62.7 21.1C62.5 21.5 62 22.6 61.6 23.6C61.3 24.6 60.8 26.1 60.6 27.2C60.3 28.2 60.1 29.4 60.1 29.9C60.2 30.4 60.4 30.4 61 30.3C61.6 30.3 62.9 29.9 63.7 29.6C64.5 29.3 65.5 28.8 65.8 28.7"/><path d="M62.7 21.1C62.8 21 62.6 20.9 63.2 20.7C63.8 20.6 65.6 20.4 66.3 20.2C67 20.1 67.1 19.8 67.3 19.7"/><path d="M62.7 22.4C62.8 22.5 62.7 22.7 63.2 22.6C63.7 22.6 65 22.3 65.6 22.1C66.2 22 66.6 21.7 66.8 21.7"/><path d="M65.6 22.1C65.4 22.7 65 24.4 64.6 25.2C64.2 26.1 63.8 26.4 63.2 27.2C62.5 27.9 61.1 29.2 60.7 29.6"/><path d="M67 19.7C66.8 20.2 66.2 21.4 65.8 22.4C65.5 23.3 65.3 24.6 65.1 25.5C64.9 26.4 64.8 27.1 64.9 27.6C64.9 28.2 65.3 28.4 65.6 28.8C65.8 29.3 66.1 29.5 66.3 30.3C66.5 31 66.7 32.2 66.8 33.1C66.9 34 66.7 34.8 66.8 35.5C67 36.1 67.5 36.5 67.8 37.1C68.1 37.6 68.6 38.2 68.6 38.9C68.7 39.6 68.4 40.8 68.2 41.3C68.1 41.8 68 41.2 67.8 41.8C67.6 42.4 67.1 43.8 66.9 44.8C66.7 45.8 66.7 46.8 66.7 47.8C66.7 48.8 66.9 49.8 66.9 50.7C66.9 51.7 66.8 53.2 66.7 53.7"/><path d="M65.6 25.5C65.5 25.7 65.1 26.4 65.1 26.9C65.1 27.4 65.1 28 65.6 28.3C66.1 28.7 67 28.8 68 28.8C69 28.8 70.7 28.6 71.6 28.3C72.5 28.1 73 27.4 73.3 27.2"/><path d="M66.1 25.2C66.6 25.2 68.3 24.9 69.2 24.8C70.1 24.7 71.2 24.8 71.6 24.8"/><path d="M64.4 23.3C64.6 23.4 65.3 23.5 65.6 23.8C65.9 24.1 66 25 66.1 25.2"/><path d="M70.4 24.8C70.4 25.1 70.4 26 70.6 26.4C70.8 26.8 71.4 27 71.6 27.2"/><path d="M68 30.3C68.7 30.4 71.1 31 72.3 31.2C73.5 31.4 74.7 31.6 75.2 31.7"/><path d="M65.6 16.9C65.7 17.1 65.7 17.9 66.1 18.3C66.5 18.7 67.3 19.2 68 19.3C68.7 19.4 69.7 19.3 70.4 19.0C71.1 18.8 72 18 72.3 17.8"/><path d="M72.8 22.4C72.7 22.7 72.2 23.5 72.3 24.1C72.4 24.6 72.8 25.3 73.3 25.7C73.8 26.1 74.6 26.2 75.2 26.4C75.8 26.7 76.3 27.1 76.7 27.4C77.1 27.7 77.3 28.1 77.6 28.3C77.9 28.6 78.4 28.7 78.6 28.8"/><path d="M73.3 22.1C73.6 22.1 74.7 21.7 75.2 21.9C75.7 22.1 76 22.7 76.4 23.3C76.8 24 77.1 25.3 77.4 26.0C77.7 26.6 77.9 26.8 78.3 27.2C78.8 27.5 79.6 27.7 80 28.1C80.4 28.5 80.8 29.1 81 29.3"/><path d="M71.1 29.3C71.4 29.1 72.1 28.4 72.8 28.1C73.5 27.8 74.4 27.4 75.2 27.4C76 27.3 76.9 27.7 77.6 27.9C78.3 28 79.2 28.1 79.5 28.1"/><path d="M71.1 29.5C71.5 29.6 72.4 29.9 73.3 29.8C74.2 29.7 75.7 29.1 76.7 28.8C77.6 28.5 78.4 28.2 78.8 28.1"/><path d="M74 31.0C74.6 30.9 76.2 30.4 77.6 30.3C79 30.2 81.1 30.1 82.5 30.4C83.9 30.6 84.9 31 86.1 31.6C87.3 32.3 88.5 33.2 89.5 34.1C90.5 35.1 91.6 36.3 92.3 37.2C93 38.1 93.2 38.8 93.7 39.4C94.2 40 94.6 40.2 95.1 40.8C95.6 41.4 97 42.6 96.8 43.0C96.6 43.4 94.4 43.1 94 43.2"/><path d="M75.5 40.0C75.8 40.2 76.8 41.1 77.7 41.6C78.6 42.2 79.8 42.9 81.1 43.3C82.3 43.7 83.9 44.1 85.3 44.2C86.7 44.2 88.2 44.1 89.5 43.9C90.8 43.7 92.4 43.1 93.1 43.0C93.9 42.9 93.8 43.1 94 43.2"/><path d="M79.1 30.5C79.2 31.1 79.7 32.7 79.7 33.8C79.6 35 79.3 36.3 78.8 37.5C78.4 38.6 77.2 40.3 76.9 40.8"/><path d="M83.9 31.1C84 31.7 84.5 33.4 84.4 34.7C84.4 36 84.2 37.6 83.6 38.9C83 40.1 81.3 41.7 80.8 42.2"/><path d="M88.4 33.5C88.5 34.1 89.2 35.5 89.2 36.6C89.2 37.8 88.9 39.1 88.4 40.3C87.9 41.4 86.5 43 86.1 43.6"/><path d="M92 37.2C92.1 37.6 92.8 38.6 92.8 39.4C92.9 40.2 92.6 41.2 92.3 41.9C92 42.6 91.3 43.3 91.2 43.6"/><path d="M66 36.4C65.4 36.8 63.4 37.7 62.4 38.5C61.4 39.4 60.6 40.5 60 41.5C59.3 42.5 58.8 43.5 58.5 44.5C58.2 45.5 58.1 46.6 58.2 47.5C58.3 48.4 58.7 49.2 59.1 49.9C59.5 50.6 59.9 51.2 60.6 51.7C61.2 52.1 62.2 52.4 63 52.8C63.7 53.2 64.5 53.6 65.1 54.0C65.7 54.5 66.3 55.3 66.6 55.5"/><path d="M66.8 35.5C66.6 35.7 66 36.6 65.4 37.1C64.9 37.6 64 38 63.4 38.5C62.8 38.9 62.1 39.4 61.8 39.6"/><path d="M63.8 38.5C64 38.7 64.7 39.2 65 39.6C65.4 40.1 65.7 41 65.8 41.3"/><path d="M69.8 32.3C70.2 32.3 71.5 32 72.2 32.1C73 32.2 73.7 32.5 74.2 32.9C74.8 33.3 75.2 33.9 75.5 34.5C75.7 35.1 75.7 35.7 75.7 36.5C75.6 37.2 75.3 37.7 75.2 38.9C75.2 40 75.4 42 75.3 43.3C75.2 44.6 74.7 46 74.4 46.9C74 47.8 73.8 48.2 73.2 48.7C72.5 49.2 70.9 49.7 70.5 49.9"/><path d="M67.8 35.3C68.1 35.3 69 35.5 69.4 35.3C69.8 35.1 69.9 34.5 70.2 34.1C70.6 33.7 71 33.2 71.4 32.9C71.9 32.6 72.8 32.4 73 32.3"/><path d="M69.2 35.7C69.2 36 69 37.1 68.8 37.7C68.7 38.2 68.5 38.7 68.4 38.9"/><path d="M67 31.3C67.2 31.3 68 31.3 68.4 31.5C68.9 31.7 69.7 32.2 69.8 32.5C70 32.8 69.8 33.2 69.4 33.3C69.1 33.4 68.2 33.3 67.8 33.1C67.5 32.9 67.3 32.4 67.2 32.3"/><path d="M68.4 40.5C68.8 40.5 69.9 40.4 70.8 40.5C71.7 40.5 73.3 40.8 73.8 40.9"/><path d="M60.9 40.9C61.3 41.2 62.6 41.9 63.3 42.7C64 43.5 64.8 45.2 65.1 45.7"/><path d="M63.6 38.8C63.9 39.1 64.9 39.7 65.4 40.3C65.9 41 66.4 42.3 66.6 42.7"/><path d="M58.2 45.7C58.5 46 59.3 47.3 60 47.8C60.7 48.2 61.5 48.4 62.4 48.4C63.3 48.4 64.6 48 65.4 47.8C66.1 47.6 66.6 47.3 66.9 47.2"/><path d="M59.4 45.4C59.6 45.5 60.5 45.8 60.9 46.3C61.3 46.8 61.8 47.6 61.8 48.4C61.7 49.2 61 50.8 60.6 51.1C60.1 51.4 59.3 50.3 59.1 50.2"/><path d="M58.9 44.3C58.8 44.7 58.4 45.9 58.4 46.7C58.4 47.4 58.5 48.3 58.9 49.0C59.2 49.8 60.1 50.8 60.4 51.1"/><path d="M61.9 47.8C62.3 47.9 64 48 64.6 48.4C65.1 48.8 65.2 49.7 65.2 50.2C65.1 50.8 64.8 51.4 64.3 51.7C63.8 52.1 62.5 52.2 62.2 52.3"/><path d="M58.6 47.0C58.7 47.2 59 48.2 59.4 48.7C59.7 49.2 60.4 49.8 60.6 50.1"/><path d="M67.8 40.3C68.4 40.3 70.2 40.1 71.4 40.3C72.5 40.6 74.1 41.6 74.7 41.8"/><path d="M67.2 44.5C67.8 44.5 69.6 44 70.8 44.2C71.9 44.4 73.5 45.4 74.1 45.7"/><path d="M67.2 48.7C67.5 48.6 68.5 48.2 69 48.4C69.5 48.6 70 49.3 70.2 49.9C70.3 50.5 70.2 51.7 69.9 52.0C69.6 52.2 68.8 51.7 68.4 51.4C68 51 67.6 50.1 67.5 49.9"/><path d="M73.2 49.0C73.3 49.4 74 50.7 74.1 51.4C74.2 52 73.6 52.8 73.5 53.1"/><path d="M70.5 49.6C70.9 49.4 72.3 48.7 73.2 48.7C74 48.7 75 49.1 75.6 49.6C76.2 50 76.4 50.8 76.8 51.4C77.3 51.9 77.8 52.5 78.4 53.0C79.1 53.4 80 54 80.7 54.2C81.3 54.5 81.9 54.2 82.3 54.6C82.6 54.9 82.9 55.7 82.9 56.2C83 56.6 82.5 56.6 82.6 57.1C82.7 57.6 82.9 58.6 83.2 59.3C83.6 60 84 60.7 84.5 61.2C85 61.8 85.8 62.3 86.4 62.8C87 63.4 87.4 63.8 88 64.4C88.7 65.1 89.8 65.9 90.3 66.6C90.8 67.4 90.9 68.3 90.9 68.9C90.9 69.4 90.8 69.6 90.3 69.8C89.8 70 88.7 70 88 70.1C87.4 70.2 86.7 70.4 86.4 70.4"/><path d="M67.8 51.7C68.2 51.8 69.1 52.2 70.2 52.5C71.3 52.9 73.3 53.4 74.4 53.7C75.5 54.1 76.1 54.2 76.8 54.6C77.6 54.9 78.2 55.4 78.7 55.8C79.3 56.3 80.1 56.8 80.3 57.1C80.6 57.4 80.2 57 80.3 57.7C80.5 58.4 80.8 60.2 81 61.2C81.2 62.3 81.4 63.2 81.6 64.1C81.9 65 82.2 65.9 82.6 66.6C83 67.4 83.4 68 83.9 68.5C84.3 69.1 84.7 69.5 85.1 69.8C85.6 70.1 86.2 70.3 86.4 70.4"/><path d="M81 58.4C81 59.1 81.1 61.6 81.3 62.8C81.5 64 81.9 64.7 82.3 65.7C82.6 66.7 83.2 68.1 83.6 68.9C83.9 69.7 84.3 70.2 84.5 70.4"/><path d="M86.4 62.8C86.6 63.1 87.2 63.8 87.4 64.4C87.6 65 87.7 65.7 87.7 66.3C87.7 66.9 87.5 67.6 87.4 67.9"/><path d="M80.7 54.2C80.6 54.5 80.2 55.4 80.2 55.8C80.1 56.3 80.1 56.8 80.3 57.1C80.6 57.4 81.3 57.6 81.6 57.6C82 57.6 82.4 57.2 82.6 57.1"/><path d="M81.3 64.7C81.6 64.7 82.7 64.9 83.2 64.7C83.8 64.5 84.5 63.8 84.8 63.5C85.2 63.1 85.1 62.7 85.1 62.5"/><path d="M83.9 68.2C84.2 68.3 85.2 68.8 85.8 68.9C86.4 68.9 87.1 68.6 87.4 68.5"/><path d="M85.8 67.3C85.9 67.6 86.2 68.7 86.4 69.2C86.7 69.6 87.2 70 87.4 70.1"/><path d="M63.2 53.0C63.7 53.3 65.4 54.1 66.4 54.6C67.4 55.2 68.5 55.7 69 56.2C69.4 56.8 69.4 56.9 69.3 57.8C69.1 58.7 68.4 60.6 68 61.6C67.6 62.7 67.2 63.3 67 64.2C66.8 65 66.6 65.8 66.7 66.7C66.8 67.7 67.2 69.1 67.7 69.9C68.1 70.8 68.4 71.4 69.3 71.8C70.1 72.3 72.2 72.4 72.8 72.5"/><path d="M70.2 55.3C70.6 55.4 71.8 55.4 72.2 55.9C72.5 56.4 72.5 57.2 72.5 58.5C72.5 59.7 72.3 61.9 72.2 63.2C72.1 64.6 71.8 65.3 71.8 66.4C71.8 67.5 72 69 72.2 69.9C72.3 70.9 72.7 71.8 72.8 72.1"/><path d="M69 57.2C69.2 57.1 70 56.5 70.6 56.6C71.1 56.6 72.2 57.4 72.5 57.5"/><path d="M69.3 58.2L72.2 57.8"/><path d="M68.6 56.8C68.9 56.6 69.9 55.8 70.2 55.3C70.6 54.8 70.8 54.2 70.9 54.0"/><path d="M66.4 64.8C66.8 64.9 68.1 65.5 69 65.5C69.8 65.5 71.1 64.9 71.5 64.8"/><path d="M67.3 69.0C67.7 69.1 68.5 69.7 69.3 69.9C70.1 70.1 71.7 70.2 72.2 70.2"/><path d="M67.2 62.4C67.1 62.9 66.4 64.5 66.3 65.4C66.2 66.3 66.4 67 66.6 67.8C66.9 68.6 67.3 69.5 67.8 70.1C68.3 70.7 69.3 71.2 69.6 71.4"/><path d="M67.8 69.8C68.1 69.9 69 70.3 69.6 70.4C70.3 70.5 71.4 70.4 71.7 70.4"/><path d="M67.8 66.9L68.4 69.0"/><path d="M68.1 67.3L67.6 69.2"/><path d="M65 66.9L64.8 67.8"/><path d="M66.3 64.5C66.7 64.6 67.7 65.3 68.4 65.4C69.2 65.5 70.3 65.3 70.8 65.1C71.4 64.9 71.6 64.3 71.7 64.2"/><path d="M69.3 54.3C69.8 54.5 71.5 55 72 55.2C72.6 55.5 72.4 55.7 72.5 55.8"/></g><path d="M6 2.5H132V76.5H6Z M68 2.5V38" fill="none" stroke="#ecb4dc" stroke-width="2.4"/><path d="M6 2.5H132V76.5H6Z M68 2.5V38" fill="none" stroke="#a83050" stroke-width="1.3" stroke-dasharray="3 2.4"/></svg>
<div class="t lbl" style="left:1130px;top:131px;font-size:9px">Zoom</div>
<div class="t lbl" style="left:1189px;top:131px;font-size:9px;letter-spacing:-0.2px">24.9%</div>
<div style="left:1130px;top:140px;width:42px;height:2px;background:#6a6a6a"></div>
<div style="left:1173px;top:140px;width:42px;height:2px;background:#6a6a6a"></div>
<svg style="position:absolute;left:1145px;top:142px" width="12" height="7"><path d="M1 6L6 1L11 6Z" fill="#fff" stroke="#555"/></svg>
<div class="t lbl" style="left:1131px;top:151px;font-size:9px">Angle</div>
<div class="t lbl" style="left:1188px;top:151px;font-size:9px;letter-spacing:-0.2px">+0008</div>
<div style="left:1130px;top:160px;width:85px;height:2px;background:#6a6a6a"></div>
<svg style="position:absolute;left:1166px;top:161px" width="12" height="7"><path d="M1 6L6 1L11 6Z" fill="#fff" stroke="#555"/></svg>
<div class="btn" style="left:1221px;top:130px;width:17px;height:17px"><i style="left:2px;top:5px;width:9px;height:3px;background:#fff"></i></div>
<div class="btn" style="left:1241px;top:130px;width:17px;height:17px"><i style="left:2px;top:5px;width:9px;height:3px;background:#fff"></i><i style="left:5px;top:2px;width:3px;height:9px;background:#fff"></i></div>
<div class="btn" style="left:1261px;top:130px;width:17px;height:17px"><i style="left:3px;top:3px;width:7px;height:7px;background:#fff"></i></div>
<div class="btn" style="left:1221px;top:149px;width:17px;height:17px"><svg style="position:absolute;left:0;top:0" width="13" height="13"><path d="M2.6 7.6A4.2 4.2 0 1 0 3.6 3.7" fill="none" stroke="#fff" stroke-width="1.7"/><path d="M0.8 7.2L4.6 5.2L5 8.8Z" fill="#fff"/></svg></div>
<div class="btn" style="left:1241px;top:149px;width:17px;height:17px"><svg style="position:absolute;left:0;top:0" width="13" height="13"><path d="M10.4 7.6A4.2 4.2 0 1 1 9.4 3.7" fill="none" stroke="#fff" stroke-width="1.7"/><path d="M12.2 7.2L8.4 5.2L8 8.8Z" fill="#fff"/></svg></div>
<div class="btn" style="left:1261px;top:149px;width:17px;height:17px"><i style="left:3px;top:3px;width:7px;height:7px;background:#fff"></i></div>
<div style="left:1126px;top:172px;width:152px;height:1px;background:#e2e2e2"></div>
<div style="left:1195px;top:171px;width:14px;height:3px;background:#8a8a8a;border-radius:1px"></div>

<div style="left:1126px;top:177px;width:12px;height:12px;background:#6a6a6a;border-radius:2px"><i style="left:2px;top:5px;width:8px;height:2px;background:#fff"></i><i style="left:5px;top:2px;width:2px;height:8px;background:#fff"></i></div>
<div class="t lbl" style="left:1141px;top:178px;font-size:10.5px">Paints Effect</div>
<div class="t lbl" style="left:1126px;top:197px">Mode</div>
<div class="box" style="left:1181px;top:193px;width:97px;height:17px"></div>
<div class="t lbl" style="left:1186px;top:197px">Normal</div>
<div class="dd" style="left:1262px;top:194px"></div>
<div class="t lbl" style="left:1126px;top:217px">Opacity</div>
<div class="bar" style="left:1181px;top:213px;width:97px;height:16px"><i style="width:39px"></i><b style="top:2px">40%</b></div>
<div style="left:1126px;top:233px;width:13px;height:13px;border:1px solid #8a8a8a;background:#fff;border-radius:2px"></div>
<div class="t lbl" style="left:1141px;top:236px">Preserve Opacity</div>
<div style="left:1126px;top:248px;width:13px;height:13px;border:1px solid #8a8a8a;background:#fff;border-radius:2px"></div>
<div class="t lbl" style="left:1141px;top:251px">Clipping Group</div>
<div style="left:1126px;top:263px;width:13px;height:13px;border:1px solid #8a8a8a;background:#fff;border-radius:50%"></div>
<div class="t lbl" style="left:1141px;top:266px">Selection Source</div>

<!-- layer panel -->
<div style="left:1126px;top:278px;width:152px;height:384px;border:1px solid #cfcfcf;background:#f9f9f9;border-radius:2px"></div>
<svg style="position:absolute;left:1126px;top:278px" width="152" height="48">
<g stroke="#222" stroke-width="1.2" stroke-linejoin="round">
<path d="M12 7H20L24.5 11.5V20.5H12Z" fill="#f4f4f4"/><path d="M20 7V11.5H24.5" fill="none"/>
<path d="M35.5 7H43.5L48 11.5V20.5H35.5Z" fill="#f4f4f4"/><path d="M38 19L39.5 14L45 8.5L48 11.5L42.5 17Z" fill="#999" stroke-width="0.9"/>
<path d="M58.5 10H63.5L65 11.5H71.5V20H58.5Z" fill="#c4c4c4"/>
<rect x="129" y="8.5" width="13" height="12" fill="#6a6a6a"/><circle cx="135.5" cy="14.5" r="3.6" fill="#fff" stroke="none"/>
<path d="M11.5 29H19L21 31V36H11.5Z" fill="#f4f4f4" stroke-width="1"/><path d="M13.5 40V43.5H24.5V36H21" fill="#f4f4f4" stroke-width="1"/><path d="M14.5 32.5H19M16.8 30.5V35" stroke-width="1.3"/><path d="M15 38H22L18.5 41.5Z" fill="#111" stroke="none"/><path d="M17 36V38M20 36V38" stroke-width="1.2"/>
<rect x="35.5" y="29.5" width="10" height="7" fill="none" stroke-width="0.9" stroke-dasharray="1.5 1"/><path d="M38 40V43.5H48V36H45" fill="#f4f4f4" stroke-width="1"/><path d="M38.5 32.5H43M40.8 30.5V35" stroke-width="1.2"/><path d="M39 38H46L42.5 41.5Z" fill="#111" stroke="none"/>
<rect x="59" y="29.5" width="13" height="13.5" fill="#f4f4f4"/><path d="M61.5 38.5L67.5 32.5L71 36L65 42Z" fill="#888" stroke-width="1"/><path d="M61.5 38.5L64 41" stroke="#fff" stroke-width="1"/>
<path d="M82 31.5H95M86.5 31.5V29.5H90.5V31.5" fill="none"/><path d="M83 32.5L84 43.5H93L94 32.5Z" fill="#9a9a9a"/><path d="M87 34.5V41.5M90 34.5V41.5" stroke="#ddd" stroke-width="0.9"/>
<path d="M105 30H113V37H105Z M110 36H120V44H110Z" stroke="#d8d8d8" fill="#f0f0f0"/>
<path d="M129 29.5H138V37H129Z M131 36H141V44H131Z" stroke="#d8d8d8" fill="#f0f0f0"/>
</g></svg>
<div style="left:1128px;top:326px;width:134px;height:320px;background:#c9c9c9"></div>
<div style="left:1129px;top:326px;width:132px;height:41px;background:#c8c8f8;border:2px solid #8a7ee0"></div>
<div style="left:1130px;top:368px;width:131px;height:40px;background:#fff"></div>
<div style="left:1132px;top:331px;width:18px;height:15px;background:#fff;border:1px solid #333"></div>
<div style="left:1132px;top:348px;width:18px;height:16px;background:#fff;border:1px solid #333"></div>
<div style="left:1151px;top:331px;width:32px;height:33px;background:#fff;border:1px solid #333"><svg style="position:absolute;left:0;top:0" width="30" height="31"><g fill="none" stroke="#a09480" stroke-opacity="0.40" stroke-width="0.50"><path d="M7.8 5.1C7.9 5 8.3 4.6 8.5 4.3C8.8 4 8.9 3.4 9.3 3.2C9.6 3 10.1 3.2 10.5 3.2C11 3.2 11.6 3.1 11.9 3.3C12.2 3.4 12.2 3.8 12.3 4.0C12.5 4.2 12.6 4.6 12.6 4.7"/><path d="M7.8 5.2C8 5.1 8.5 5 8.9 4.8C9.2 4.7 9.5 4.4 9.9 4.2C10.2 4.1 10.5 3.9 10.8 3.8C11.2 3.7 11.6 3.8 11.9 3.7C12.2 3.7 12.5 3.7 12.6 3.6"/><path d="M8.1 6.6C8.1 6.4 8.3 5.8 8.5 5.3C8.7 4.9 8.9 4.5 9.1 4.2C9.3 3.9 9.4 3.6 9.5 3.5"/><path d="M8.2 6.5C8.3 6.3 8.7 5.6 9 5.1C9.2 4.6 9.4 3.8 9.5 3.5"/><path d="M12.5 3.0C12.6 3 12.8 3.3 13 3.5C13.3 3.7 13.6 3.8 13.9 4.0C14.1 4.2 14.2 4.4 14.3 4.6C14.4 4.8 14.4 5.1 14.5 5.3C14.5 5.5 14.4 5.7 14.4 5.8"/><path d="M14.1 3.3C14.1 3.4 14.1 3.8 14.2 4.0C14.3 4.3 14.6 4.5 14.6 4.8C14.6 5 14.5 5.4 14.4 5.5"/><path d="M15.4 4.0C15.3 4.1 15 4.4 14.9 4.6C14.8 4.8 14.8 5.1 14.8 5.3C14.7 5.4 14.7 5.6 14.7 5.7"/><path d="M10.6 4.8C10.7 4.7 11.1 4.5 11.3 4.5C11.5 4.4 11.6 4.3 11.7 4.2C11.9 4.2 12.1 4.2 12.2 4.1"/><path d="M10.7 3.9C10.8 3.9 11.2 4.1 11.4 4.1C11.6 4.1 11.7 4 11.9 4.0C12.1 4.1 12.4 4.2 12.5 4.3"/><path d="M12.2 3.5C12.2 3.6 12.5 4.2 12.6 4.5C12.8 4.8 13 5.2 13.1 5.4"/><path d="M13 5.0C13 5.1 13.2 5.1 13.3 5.2C13.4 5.2 13.5 5.4 13.5 5.5"/><path d="M11.6 4.9C11.5 4.9 11.2 5.1 11.1 5.2C10.9 5.3 10.8 5.5 10.8 5.7C10.7 5.9 10.7 6 10.8 6.2C10.8 6.4 10.8 6.6 10.9 6.7C11.1 6.9 11.3 7 11.5 7.0C11.8 7.1 12 7.1 12.3 7.0C12.5 7 12.7 7 13 6.9C13.3 6.8 13.9 6.4 14.1 6.3"/><path d="M11.5 5.1C11.6 5.1 11.9 4.8 12.1 4.7C12.2 4.7 12.4 4.8 12.4 4.9C12.5 5 12.3 5.3 12.2 5.3C12.1 5.4 11.8 5.3 11.8 5.3"/><path d="M11.9 3.3C12 3.4 12.2 3.8 12.3 4.0C12.4 4.2 12.5 4.6 12.6 4.7"/><path d="M13.9 6.2C14 6.2 14.6 6 14.9 6.0C15.2 6 15.6 6.1 15.8 6.2C16.1 6.3 16.3 6.6 16.4 6.7"/><path d="M12.1 6.7C12.1 6.7 12.2 6.9 12.3 6.9C12.4 6.9 12.5 6.8 12.6 6.8"/><path d="M12.8 5.0C12.9 5 13.2 4.9 13.3 5.0C13.4 5.2 13.4 5.4 13.4 5.6C13.4 5.8 13.2 6.1 13.2 6.2"/><path d="M12 5.4C12.1 5.4 12.3 5.2 12.5 5.1C12.6 5 12.9 5 13 4.9"/><path d="M13.8 6.1C14 6.1 14.4 5.9 14.7 5.8C14.9 5.8 15.2 5.6 15.4 5.6C15.7 5.6 16 5.7 16.1 5.7"/><path d="M15.4 5.9C15.6 6 16.2 6 16.4 6.1C16.7 6.2 16.8 6.3 16.9 6.5C17.1 6.7 17.2 7.2 17.3 7.4C17.3 7.6 17.3 7.8 17.3 7.9"/><path d="M16.6 6.9C16.7 7 17 7.4 17.1 7.6C17.2 7.8 17.2 8 17.2 8.1"/><path d="M11.9 7.2C12.2 7.2 13.2 6.9 13.7 6.8C14.2 6.6 14.5 6.5 14.9 6.4C15.2 6.3 15.5 6.2 15.7 6.2"/><path d="M14.5 6.4C14.7 6.4 15.3 6.4 15.7 6.5C16 6.6 16.4 6.7 16.7 6.9C16.9 7.2 17.2 7.5 17.3 7.7C17.4 8 17.3 8.3 17.2 8.6C17.1 8.9 16.8 9.2 16.7 9.4C16.5 9.6 16.2 9.7 16.1 9.7"/><path d="M15.3 7.1C15.4 7.3 15.9 7.6 16.1 7.8C16.2 8.1 16.3 8.4 16.3 8.6C16.3 8.9 16.1 9.2 16.1 9.3"/><path d="M16.5 7.3C16.5 7.5 16.8 7.8 16.9 8.1C16.9 8.4 16.7 9 16.7 9.1"/><path d="M11.2 9.6C11.4 9.4 12.2 8.7 12.7 8.3C13.2 8 13.7 7.8 14.2 7.6C14.6 7.5 15.1 7.3 15.3 7.2"/><path d="M11.7 9.1C11.9 9 12.7 8.6 13.2 8.4C13.7 8.2 14.4 8.1 14.7 8.0"/><path d="M14.5 6.6C14.7 6.5 15.1 6.5 15.3 6.5C15.6 6.5 15.9 6.7 16 6.7"/><path d="M15.6 6.7C15.7 6.8 16.2 6.9 16.4 7.1C16.6 7.2 16.7 7.5 16.8 7.6"/><path d="M11.9 7.1C12.1 7.1 12.5 6.9 12.8 6.7C13.1 6.6 13.5 6.4 13.8 6.2C14.2 6.1 14.6 6 14.9 5.9C15.3 5.8 15.9 5.7 16.1 5.7"/><path d="M15.5 6.5C15.6 6.6 16 6.9 16.1 7.1C16.3 7.3 16.3 7.5 16.4 7.8C16.5 8 16.7 8.3 16.7 8.5C16.8 8.8 16.9 9 16.9 9.2C16.9 9.4 16.6 9.7 16.6 9.8"/><path d="M15.5 7.4C15.6 7.5 15.9 7.8 16 8.0C16.1 8.2 16.1 8.5 16.1 8.7C16.1 9 16 9.4 16 9.5"/><path d="M11.9 8.2C12.2 8.1 12.9 7.7 13.3 7.5C13.7 7.3 14.2 7.2 14.4 7.2"/><path d="M13.6 8.9C13.6 8.8 13.6 8.5 13.7 8.4C13.8 8.2 14 8.1 14.2 8.1C14.4 8 14.6 8.1 14.7 8.2C14.9 8.2 15 8.4 15.1 8.6C15.2 8.8 15.3 9 15.4 9.2C15.5 9.4 15.8 9.7 15.8 9.8"/><path d="M9.4 7.9C9.4 8.1 9.2 8.5 9 8.9C8.9 9.4 8.7 10 8.6 10.4C8.5 10.8 8.4 11.3 8.4 11.5C8.4 11.8 8.5 11.7 8.8 11.7C9 11.7 9.5 11.5 9.9 11.4C10.2 11.3 10.6 11.1 10.8 11.0"/><path d="M9.4 7.9C9.5 7.9 9.4 7.8 9.7 7.7C9.9 7.7 10.7 7.6 11 7.5C11.2 7.5 11.3 7.4 11.4 7.3"/><path d="M9.4 8.4C9.5 8.5 9.5 8.5 9.7 8.5C9.9 8.5 10.4 8.4 10.7 8.3C10.9 8.3 11.1 8.2 11.2 8.1"/><path d="M10.7 8.3C10.6 8.5 10.4 9.3 10.3 9.6C10.1 10 9.9 10.1 9.7 10.4C9.4 10.7 8.8 11.2 8.6 11.4"/><path d="M11.3 7.3C11.2 7.5 10.9 8 10.8 8.4C10.6 8.8 10.5 9.3 10.5 9.7C10.4 10.1 10.3 10.4 10.4 10.6C10.4 10.8 10.6 10.9 10.7 11.1C10.8 11.3 10.9 11.4 11 11.7C11 12 11.1 12.5 11.2 12.9C11.2 13.2 11.1 13.6 11.2 13.8C11.2 14.1 11.5 14.3 11.6 14.5C11.7 14.7 11.9 15 11.9 15.2C12 15.5 11.8 16 11.8 16.2C11.7 16.4 11.7 16.2 11.6 16.5C11.5 16.7 11.3 17.3 11.2 17.7C11.1 18.1 11.1 18.5 11.1 18.9C11.1 19.3 11.2 19.7 11.2 20.2C11.2 20.6 11.1 21.2 11.1 21.4"/><path d="M10.7 9.7C10.6 9.8 10.5 10.1 10.5 10.3C10.5 10.5 10.5 10.8 10.7 10.9C10.9 11 11.2 11.1 11.7 11.1C12.1 11.1 12.8 11 13.2 10.9C13.5 10.8 13.7 10.5 13.9 10.4"/><path d="M10.8 9.6C11.1 9.6 11.8 9.5 12.2 9.4C12.5 9.4 13 9.4 13.2 9.4"/><path d="M10.2 8.8C10.2 8.9 10.5 8.9 10.7 9.0C10.8 9.1 10.8 9.5 10.8 9.6"/><path d="M12.7 9.4C12.7 9.5 12.7 9.9 12.8 10.1C12.8 10.3 13.1 10.4 13.2 10.4"/><path d="M11.7 11.7C12 11.8 13 12 13.5 12.1C14 12.2 14.5 12.2 14.7 12.3"/><path d="M10.7 6.2C10.7 6.3 10.7 6.6 10.8 6.8C11 6.9 11.4 7.1 11.7 7.1C12 7.2 12.4 7.1 12.7 7.1C13 7 13.3 6.6 13.5 6.6"/><path d="M13.7 8.4C13.6 8.5 13.4 8.9 13.5 9.1C13.5 9.4 13.7 9.6 13.9 9.8C14.1 10 14.4 10 14.7 10.1C14.9 10.2 15.1 10.4 15.3 10.5C15.4 10.6 15.5 10.8 15.7 10.9C15.8 11 16 11.1 16.1 11.1"/><path d="M13.9 8.3C14 8.3 14.4 8.1 14.7 8.2C14.9 8.3 15 8.5 15.2 8.8C15.3 9.1 15.4 9.6 15.6 9.9C15.7 10.2 15.8 10.3 16 10.4C16.1 10.6 16.5 10.6 16.7 10.8C16.8 10.9 17 11.2 17.1 11.3"/><path d="M13 11.3C13.1 11.2 13.4 10.9 13.7 10.8C13.9 10.7 14.3 10.5 14.7 10.5C15 10.5 15.4 10.6 15.7 10.7C16 10.7 16.3 10.8 16.5 10.8"/><path d="M13 11.4C13.1 11.4 13.5 11.5 13.9 11.5C14.2 11.4 14.9 11.2 15.3 11.1C15.6 11 16 10.8 16.2 10.8"/><path d="M14.2 12.0C14.4 11.9 15.1 11.7 15.7 11.7C16.2 11.6 17.1 11.6 17.7 11.7C18.3 11.8 18.7 12 19.2 12.3C19.7 12.5 20.2 12.9 20.6 13.3C21 13.7 21.5 14.2 21.8 14.6C22.1 14.9 22.2 15.2 22.4 15.5C22.6 15.7 22.7 15.8 22.9 16.0C23.2 16.3 23.7 16.8 23.6 17.0C23.6 17.1 22.7 17 22.5 17.0"/><path d="M14.8 15.7C14.9 15.8 15.3 16.2 15.7 16.4C16.1 16.6 16.6 16.9 17.1 17.1C17.6 17.3 18.3 17.4 18.9 17.4C19.4 17.5 20.1 17.4 20.6 17.3C21.2 17.2 21.8 17 22.1 17.0C22.4 16.9 22.4 17 22.5 17.0"/><path d="M16.3 11.8C16.3 12 16.5 12.7 16.5 13.2C16.5 13.7 16.4 14.2 16.2 14.7C16 15.2 15.5 15.8 15.4 16.0"/><path d="M18.3 12.0C18.3 12.3 18.5 13 18.5 13.5C18.5 14.1 18.4 14.7 18.2 15.2C17.9 15.8 17.2 16.4 17 16.6"/><path d="M20.1 13.0C20.2 13.3 20.5 13.9 20.5 14.3C20.5 14.8 20.4 15.3 20.1 15.8C19.9 16.3 19.4 17 19.2 17.2"/><path d="M21.7 14.6C21.7 14.7 22 15.1 22 15.5C22 15.8 21.9 16.2 21.8 16.5C21.7 16.8 21.4 17.1 21.3 17.2"/><path d="M10.8 14.2C10.6 14.4 9.7 14.8 9.3 15.1C8.9 15.5 8.6 15.9 8.3 16.3C8 16.8 7.8 17.2 7.7 17.6C7.6 18 7.5 18.4 7.6 18.8C7.6 19.2 7.8 19.5 7.9 19.8C8.1 20.1 8.3 20.3 8.6 20.5C8.8 20.7 9.3 20.9 9.6 21.0C9.9 21.2 10.2 21.3 10.4 21.5C10.7 21.7 11 22 11.1 22.1"/><path d="M11.2 13.8C11.1 14 10.8 14.3 10.6 14.5C10.4 14.7 10 14.9 9.8 15.1C9.5 15.3 9.2 15.5 9.1 15.6"/><path d="M9.9 15.1C10 15.2 10.3 15.4 10.4 15.6C10.6 15.8 10.7 16.1 10.8 16.2"/><path d="M12.4 12.5C12.6 12.5 13.1 12.4 13.4 12.4C13.7 12.5 14 12.6 14.3 12.8C14.5 12.9 14.7 13.2 14.8 13.4C14.9 13.7 14.9 14 14.8 14.3C14.8 14.6 14.7 14.8 14.7 15.2C14.7 15.7 14.8 16.5 14.7 17.1C14.6 17.6 14.5 18.2 14.3 18.6C14.2 18.9 14.1 19.1 13.8 19.3C13.5 19.5 12.9 19.7 12.7 19.8"/><path d="M11.6 13.8C11.7 13.8 12.1 13.8 12.3 13.8C12.4 13.7 12.5 13.4 12.6 13.3C12.7 13.1 12.9 12.9 13.1 12.8C13.3 12.7 13.7 12.6 13.8 12.5"/><path d="M12.2 13.9C12.1 14.1 12.1 14.5 12 14.8C12 15 11.9 15.2 11.8 15.2"/><path d="M11.2 12.1C11.3 12.1 11.6 12.1 11.8 12.2C12 12.3 12.4 12.5 12.4 12.6C12.5 12.7 12.4 12.9 12.3 12.9C12.1 13 11.7 12.9 11.6 12.9C11.4 12.8 11.4 12.6 11.3 12.5"/><path d="M11.8 15.9C12 15.9 12.5 15.9 12.8 15.9C13.2 15.9 13.9 16 14.1 16.1"/><path d="M8.7 16.1C8.9 16.2 9.4 16.5 9.7 16.8C10 17.2 10.3 17.9 10.4 18.1"/><path d="M9.8 15.2C9.9 15.3 10.4 15.6 10.6 15.8C10.8 16.1 11 16.7 11.1 16.8"/><path d="M7.6 18.1C7.7 18.2 8 18.7 8.3 18.9C8.6 19.1 8.9 19.2 9.3 19.2C9.7 19.2 10.3 19 10.6 18.9C10.9 18.8 11.1 18.7 11.2 18.7"/><path d="M8.1 17.9C8.2 18 8.5 18.1 8.7 18.3C8.9 18.5 9.1 18.9 9.1 19.2C9 19.5 8.8 20.2 8.6 20.3C8.4 20.4 8 20 7.9 19.9"/><path d="M7.8 17.5C7.8 17.6 7.7 18.1 7.7 18.5C7.7 18.8 7.7 19.1 7.8 19.5C8 19.8 8.4 20.2 8.5 20.3"/><path d="M9.1 19.0C9.3 19 10 19 10.2 19.2C10.5 19.4 10.5 19.7 10.5 19.9C10.5 20.2 10.3 20.4 10.1 20.6C9.9 20.7 9.4 20.8 9.2 20.8"/><path d="M7.7 18.6C7.8 18.7 7.9 19.1 8.1 19.3C8.2 19.5 8.5 19.8 8.6 19.9"/><path d="M11.6 15.8C11.8 15.8 12.6 15.7 13.1 15.8C13.5 16 14.2 16.4 14.4 16.5"/><path d="M11.3 17.6C11.6 17.6 12.3 17.4 12.8 17.5C13.3 17.5 14 18 14.2 18.1"/><path d="M11.3 19.3C11.4 19.3 11.9 19.1 12.1 19.2C12.3 19.3 12.5 19.5 12.6 19.8C12.6 20 12.6 20.6 12.4 20.7C12.3 20.8 12 20.6 11.8 20.4C11.6 20.3 11.5 19.9 11.4 19.8"/><path d="M13.8 19.4C13.9 19.6 14.2 20.1 14.2 20.4C14.2 20.7 14 21 13.9 21.2"/><path d="M12.7 19.7C12.9 19.6 13.5 19.3 13.8 19.3C14.2 19.3 14.6 19.5 14.8 19.7C15.1 19.9 15.1 20.2 15.3 20.4C15.5 20.7 15.7 20.9 16 21.1C16.3 21.3 16.7 21.5 16.9 21.6C17.2 21.7 17.4 21.6 17.6 21.7C17.8 21.9 17.8 22.2 17.9 22.4C17.9 22.6 17.7 22.6 17.7 22.8C17.8 23 17.9 23.4 18 23.7C18.1 24 18.3 24.3 18.5 24.5C18.8 24.7 19.1 24.9 19.3 25.2C19.6 25.4 19.7 25.6 20 25.8C20.3 26.1 20.7 26.4 20.9 26.7C21.1 27 21.2 27.4 21.2 27.7C21.2 27.9 21.1 28 20.9 28.0C20.7 28.1 20.3 28.1 20 28.2C19.7 28.2 19.4 28.3 19.3 28.3"/><path d="M11.6 20.5C11.7 20.6 12.1 20.8 12.6 20.9C13 21 13.9 21.3 14.3 21.4C14.8 21.5 15 21.6 15.3 21.7C15.6 21.9 15.9 22.1 16.1 22.3C16.4 22.4 16.7 22.7 16.8 22.8C16.9 22.9 16.8 22.8 16.8 23.0C16.8 23.3 17 24.1 17.1 24.5C17.2 24.9 17.2 25.3 17.3 25.7C17.4 26.1 17.6 26.4 17.7 26.7C17.9 27 18.1 27.3 18.3 27.5C18.4 27.7 18.6 27.9 18.8 28.0C19 28.2 19.2 28.3 19.3 28.3"/><path d="M17.1 23.3C17.1 23.6 17.1 24.7 17.2 25.2C17.3 25.7 17.4 25.9 17.6 26.3C17.8 26.8 18 27.3 18.1 27.7C18.3 28 18.5 28.2 18.5 28.3"/><path d="M19.3 25.2C19.4 25.3 19.6 25.6 19.7 25.8C19.8 26.1 19.9 26.4 19.9 26.6C19.9 26.8 19.8 27.2 19.7 27.3"/><path d="M16.9 21.6C16.9 21.7 16.8 22.1 16.7 22.3C16.7 22.5 16.7 22.7 16.8 22.8C16.9 22.9 17.2 23 17.3 23.0C17.5 23 17.7 22.8 17.7 22.8"/><path d="M17.2 25.9C17.3 25.9 17.8 26 18 25.9C18.2 25.9 18.5 25.6 18.7 25.4C18.8 25.3 18.8 25.1 18.8 25.0"/><path d="M18.3 27.4C18.4 27.4 18.8 27.6 19.1 27.7C19.3 27.7 19.6 27.5 19.7 27.5"/><path d="M19.1 27.0C19.1 27.1 19.2 27.6 19.3 27.8C19.4 28 19.7 28.1 19.7 28.2"/><path d="M9.7 21.1C9.9 21.2 10.6 21.6 11 21.8C11.4 22 11.9 22.2 12.1 22.4C12.3 22.6 12.3 22.7 12.2 23.1C12.1 23.5 11.8 24.2 11.7 24.7C11.5 25.1 11.3 25.4 11.3 25.7C11.2 26.1 11.1 26.4 11.1 26.8C11.2 27.2 11.3 27.7 11.5 28.1C11.7 28.4 11.8 28.7 12.2 28.9C12.6 29.1 13.4 29.1 13.7 29.1"/><path d="M12.6 22.0C12.7 22.1 13.2 22.1 13.4 22.3C13.5 22.5 13.5 22.8 13.5 23.4C13.5 23.9 13.4 24.8 13.4 25.3C13.3 25.9 13.3 26.2 13.3 26.6C13.3 27.1 13.3 27.7 13.4 28.1C13.5 28.5 13.6 28.9 13.7 29.0"/><path d="M12.1 22.8C12.2 22.8 12.5 22.5 12.7 22.6C13 22.6 13.4 22.9 13.5 23.0"/><path d="M12.2 23.2L13.4 23.1"/><path d="M11.9 22.7C12 22.6 12.4 22.2 12.6 22.0C12.7 21.8 12.8 21.6 12.9 21.5"/><path d="M11 26.0C11.2 26 11.7 26.2 12.1 26.2C12.4 26.2 12.9 26 13.1 26.0"/><path d="M11.4 27.7C11.5 27.8 11.9 28 12.2 28.1C12.5 28.2 13.2 28.2 13.4 28.2"/><path d="M11.3 25.0C11.3 25.2 11 25.8 11 26.2C10.9 26.6 11 26.9 11.1 27.2C11.2 27.5 11.4 27.9 11.6 28.2C11.8 28.4 12.2 28.6 12.3 28.7"/><path d="M11.6 28.1C11.7 28.1 12.1 28.3 12.3 28.3C12.6 28.4 13.1 28.3 13.2 28.3"/><path d="M11.6 26.8L11.8 27.7"/><path d="M11.7 27.0L11.5 27.8"/><path d="M10.4 26.8L10.3 27.2"/><path d="M11 25.8C11.1 25.9 11.5 26.2 11.8 26.2C12.2 26.3 12.6 26.2 12.8 26.1C13.1 26 13.2 25.8 13.2 25.7"/><path d="M12.2 21.6C12.4 21.7 13.1 21.9 13.3 22.0C13.6 22.1 13.5 22.2 13.5 22.3"/></g></svg></div>
<div style="left:1132px;top:373px;width:18px;height:15px;background:#fff;border:1px solid #333"></div>
<div style="left:1132px;top:390px;width:18px;height:16px;background:#fff;border:1px solid #333"></div>
<div style="left:1151px;top:373px;width:32px;height:33px;background:#fff;border:1px solid #333"><svg style="position:absolute;left:0;top:0" width="30" height="31"><g fill="none" stroke="#a09480" stroke-opacity="0.40" stroke-width="0.50"><path d="M7.8 5.1C7.9 5 8.3 4.6 8.5 4.3C8.8 4 8.9 3.4 9.3 3.2C9.6 3 10.1 3.2 10.5 3.2C11 3.2 11.6 3.1 11.9 3.3C12.2 3.4 12.2 3.8 12.3 4.0C12.5 4.2 12.6 4.6 12.6 4.7"/><path d="M7.8 5.2C8 5.1 8.5 5 8.9 4.8C9.2 4.7 9.5 4.4 9.9 4.2C10.2 4.1 10.5 3.9 10.8 3.8C11.2 3.7 11.6 3.8 11.9 3.7C12.2 3.7 12.5 3.7 12.6 3.6"/><path d="M8.1 6.6C8.1 6.4 8.3 5.8 8.5 5.3C8.7 4.9 8.9 4.5 9.1 4.2C9.3 3.9 9.4 3.6 9.5 3.5"/><path d="M8.2 6.5C8.3 6.3 8.7 5.6 9 5.1C9.2 4.6 9.4 3.8 9.5 3.5"/><path d="M12.5 3.0C12.6 3 12.8 3.3 13 3.5C13.3 3.7 13.6 3.8 13.9 4.0C14.1 4.2 14.2 4.4 14.3 4.6C14.4 4.8 14.4 5.1 14.5 5.3C14.5 5.5 14.4 5.7 14.4 5.8"/><path d="M14.1 3.3C14.1 3.4 14.1 3.8 14.2 4.0C14.3 4.3 14.6 4.5 14.6 4.8C14.6 5 14.5 5.4 14.4 5.5"/><path d="M15.4 4.0C15.3 4.1 15 4.4 14.9 4.6C14.8 4.8 14.8 5.1 14.8 5.3C14.7 5.4 14.7 5.6 14.7 5.7"/><path d="M10.6 4.8C10.7 4.7 11.1 4.5 11.3 4.5C11.5 4.4 11.6 4.3 11.7 4.2C11.9 4.2 12.1 4.2 12.2 4.1"/><path d="M10.7 3.9C10.8 3.9 11.2 4.1 11.4 4.1C11.6 4.1 11.7 4 11.9 4.0C12.1 4.1 12.4 4.2 12.5 4.3"/><path d="M12.2 3.5C12.2 3.6 12.5 4.2 12.6 4.5C12.8 4.8 13 5.2 13.1 5.4"/><path d="M13 5.0C13 5.1 13.2 5.1 13.3 5.2C13.4 5.2 13.5 5.4 13.5 5.5"/><path d="M11.6 4.9C11.5 4.9 11.2 5.1 11.1 5.2C10.9 5.3 10.8 5.5 10.8 5.7C10.7 5.9 10.7 6 10.8 6.2C10.8 6.4 10.8 6.6 10.9 6.7C11.1 6.9 11.3 7 11.5 7.0C11.8 7.1 12 7.1 12.3 7.0C12.5 7 12.7 7 13 6.9C13.3 6.8 13.9 6.4 14.1 6.3"/><path d="M11.5 5.1C11.6 5.1 11.9 4.8 12.1 4.7C12.2 4.7 12.4 4.8 12.4 4.9C12.5 5 12.3 5.3 12.2 5.3C12.1 5.4 11.8 5.3 11.8 5.3"/><path d="M11.9 3.3C12 3.4 12.2 3.8 12.3 4.0C12.4 4.2 12.5 4.6 12.6 4.7"/><path d="M13.9 6.2C14 6.2 14.6 6 14.9 6.0C15.2 6 15.6 6.1 15.8 6.2C16.1 6.3 16.3 6.6 16.4 6.7"/><path d="M12.1 6.7C12.1 6.7 12.2 6.9 12.3 6.9C12.4 6.9 12.5 6.8 12.6 6.8"/><path d="M12.8 5.0C12.9 5 13.2 4.9 13.3 5.0C13.4 5.2 13.4 5.4 13.4 5.6C13.4 5.8 13.2 6.1 13.2 6.2"/><path d="M12 5.4C12.1 5.4 12.3 5.2 12.5 5.1C12.6 5 12.9 5 13 4.9"/><path d="M13.8 6.1C14 6.1 14.4 5.9 14.7 5.8C14.9 5.8 15.2 5.6 15.4 5.6C15.7 5.6 16 5.7 16.1 5.7"/><path d="M15.4 5.9C15.6 6 16.2 6 16.4 6.1C16.7 6.2 16.8 6.3 16.9 6.5C17.1 6.7 17.2 7.2 17.3 7.4C17.3 7.6 17.3 7.8 17.3 7.9"/><path d="M16.6 6.9C16.7 7 17 7.4 17.1 7.6C17.2 7.8 17.2 8 17.2 8.1"/><path d="M11.9 7.2C12.2 7.2 13.2 6.9 13.7 6.8C14.2 6.6 14.5 6.5 14.9 6.4C15.2 6.3 15.5 6.2 15.7 6.2"/><path d="M14.5 6.4C14.7 6.4 15.3 6.4 15.7 6.5C16 6.6 16.4 6.7 16.7 6.9C16.9 7.2 17.2 7.5 17.3 7.7C17.4 8 17.3 8.3 17.2 8.6C17.1 8.9 16.8 9.2 16.7 9.4C16.5 9.6 16.2 9.7 16.1 9.7"/><path d="M15.3 7.1C15.4 7.3 15.9 7.6 16.1 7.8C16.2 8.1 16.3 8.4 16.3 8.6C16.3 8.9 16.1 9.2 16.1 9.3"/><path d="M16.5 7.3C16.5 7.5 16.8 7.8 16.9 8.1C16.9 8.4 16.7 9 16.7 9.1"/><path d="M11.2 9.6C11.4 9.4 12.2 8.7 12.7 8.3C13.2 8 13.7 7.8 14.2 7.6C14.6 7.5 15.1 7.3 15.3 7.2"/><path d="M11.7 9.1C11.9 9 12.7 8.6 13.2 8.4C13.7 8.2 14.4 8.1 14.7 8.0"/><path d="M14.5 6.6C14.7 6.5 15.1 6.5 15.3 6.5C15.6 6.5 15.9 6.7 16 6.7"/><path d="M15.6 6.7C15.7 6.8 16.2 6.9 16.4 7.1C16.6 7.2 16.7 7.5 16.8 7.6"/><path d="M11.9 7.1C12.1 7.1 12.5 6.9 12.8 6.7C13.1 6.6 13.5 6.4 13.8 6.2C14.2 6.1 14.6 6 14.9 5.9C15.3 5.8 15.9 5.7 16.1 5.7"/><path d="M15.5 6.5C15.6 6.6 16 6.9 16.1 7.1C16.3 7.3 16.3 7.5 16.4 7.8C16.5 8 16.7 8.3 16.7 8.5C16.8 8.8 16.9 9 16.9 9.2C16.9 9.4 16.6 9.7 16.6 9.8"/><path d="M15.5 7.4C15.6 7.5 15.9 7.8 16 8.0C16.1 8.2 16.1 8.5 16.1 8.7C16.1 9 16 9.4 16 9.5"/><path d="M11.9 8.2C12.2 8.1 12.9 7.7 13.3 7.5C13.7 7.3 14.2 7.2 14.4 7.2"/><path d="M13.6 8.9C13.6 8.8 13.6 8.5 13.7 8.4C13.8 8.2 14 8.1 14.2 8.1C14.4 8 14.6 8.1 14.7 8.2C14.9 8.2 15 8.4 15.1 8.6C15.2 8.8 15.3 9 15.4 9.2C15.5 9.4 15.8 9.7 15.8 9.8"/><path d="M9.4 7.9C9.4 8.1 9.2 8.5 9 8.9C8.9 9.4 8.7 10 8.6 10.4C8.5 10.8 8.4 11.3 8.4 11.5C8.4 11.8 8.5 11.7 8.8 11.7C9 11.7 9.5 11.5 9.9 11.4C10.2 11.3 10.6 11.1 10.8 11.0"/><path d="M9.4 7.9C9.5 7.9 9.4 7.8 9.7 7.7C9.9 7.7 10.7 7.6 11 7.5C11.2 7.5 11.3 7.4 11.4 7.3"/><path d="M9.4 8.4C9.5 8.5 9.5 8.5 9.7 8.5C9.9 8.5 10.4 8.4 10.7 8.3C10.9 8.3 11.1 8.2 11.2 8.1"/><path d="M10.7 8.3C10.6 8.5 10.4 9.3 10.3 9.6C10.1 10 9.9 10.1 9.7 10.4C9.4 10.7 8.8 11.2 8.6 11.4"/><path d="M11.3 7.3C11.2 7.5 10.9 8 10.8 8.4C10.6 8.8 10.5 9.3 10.5 9.7C10.4 10.1 10.3 10.4 10.4 10.6C10.4 10.8 10.6 10.9 10.7 11.1C10.8 11.3 10.9 11.4 11 11.7C11 12 11.1 12.5 11.2 12.9C11.2 13.2 11.1 13.6 11.2 13.8C11.2 14.1 11.5 14.3 11.6 14.5C11.7 14.7 11.9 15 11.9 15.2C12 15.5 11.8 16 11.8 16.2C11.7 16.4 11.7 16.2 11.6 16.5C11.5 16.7 11.3 17.3 11.2 17.7C11.1 18.1 11.1 18.5 11.1 18.9C11.1 19.3 11.2 19.7 11.2 20.2C11.2 20.6 11.1 21.2 11.1 21.4"/><path d="M10.7 9.7C10.6 9.8 10.5 10.1 10.5 10.3C10.5 10.5 10.5 10.8 10.7 10.9C10.9 11 11.2 11.1 11.7 11.1C12.1 11.1 12.8 11 13.2 10.9C13.5 10.8 13.7 10.5 13.9 10.4"/><path d="M10.8 9.6C11.1 9.6 11.8 9.5 12.2 9.4C12.5 9.4 13 9.4 13.2 9.4"/><path d="M10.2 8.8C10.2 8.9 10.5 8.9 10.7 9.0C10.8 9.1 10.8 9.5 10.8 9.6"/><path d="M12.7 9.4C12.7 9.5 12.7 9.9 12.8 10.1C12.8 10.3 13.1 10.4 13.2 10.4"/><path d="M11.7 11.7C12 11.8 13 12 13.5 12.1C14 12.2 14.5 12.2 14.7 12.3"/><path d="M10.7 6.2C10.7 6.3 10.7 6.6 10.8 6.8C11 6.9 11.4 7.1 11.7 7.1C12 7.2 12.4 7.1 12.7 7.1C13 7 13.3 6.6 13.5 6.6"/><path d="M13.7 8.4C13.6 8.5 13.4 8.9 13.5 9.1C13.5 9.4 13.7 9.6 13.9 9.8C14.1 10 14.4 10 14.7 10.1C14.9 10.2 15.1 10.4 15.3 10.5C15.4 10.6 15.5 10.8 15.7 10.9C15.8 11 16 11.1 16.1 11.1"/><path d="M13.9 8.3C14 8.3 14.4 8.1 14.7 8.2C14.9 8.3 15 8.5 15.2 8.8C15.3 9.1 15.4 9.6 15.6 9.9C15.7 10.2 15.8 10.3 16 10.4C16.1 10.6 16.5 10.6 16.7 10.8C16.8 10.9 17 11.2 17.1 11.3"/><path d="M13 11.3C13.1 11.2 13.4 10.9 13.7 10.8C13.9 10.7 14.3 10.5 14.7 10.5C15 10.5 15.4 10.6 15.7 10.7C16 10.7 16.3 10.8 16.5 10.8"/><path d="M13 11.4C13.1 11.4 13.5 11.5 13.9 11.5C14.2 11.4 14.9 11.2 15.3 11.1C15.6 11 16 10.8 16.2 10.8"/><path d="M14.2 12.0C14.4 11.9 15.1 11.7 15.7 11.7C16.2 11.6 17.1 11.6 17.7 11.7C18.3 11.8 18.7 12 19.2 12.3C19.7 12.5 20.2 12.9 20.6 13.3C21 13.7 21.5 14.2 21.8 14.6C22.1 14.9 22.2 15.2 22.4 15.5C22.6 15.7 22.7 15.8 22.9 16.0C23.2 16.3 23.7 16.8 23.6 17.0C23.6 17.1 22.7 17 22.5 17.0"/><path d="M14.8 15.7C14.9 15.8 15.3 16.2 15.7 16.4C16.1 16.6 16.6 16.9 17.1 17.1C17.6 17.3 18.3 17.4 18.9 17.4C19.4 17.5 20.1 17.4 20.6 17.3C21.2 17.2 21.8 17 22.1 17.0C22.4 16.9 22.4 17 22.5 17.0"/><path d="M16.3 11.8C16.3 12 16.5 12.7 16.5 13.2C16.5 13.7 16.4 14.2 16.2 14.7C16 15.2 15.5 15.8 15.4 16.0"/><path d="M18.3 12.0C18.3 12.3 18.5 13 18.5 13.5C18.5 14.1 18.4 14.7 18.2 15.2C17.9 15.8 17.2 16.4 17 16.6"/><path d="M20.1 13.0C20.2 13.3 20.5 13.9 20.5 14.3C20.5 14.8 20.4 15.3 20.1 15.8C19.9 16.3 19.4 17 19.2 17.2"/><path d="M21.7 14.6C21.7 14.7 22 15.1 22 15.5C22 15.8 21.9 16.2 21.8 16.5C21.7 16.8 21.4 17.1 21.3 17.2"/><path d="M10.8 14.2C10.6 14.4 9.7 14.8 9.3 15.1C8.9 15.5 8.6 15.9 8.3 16.3C8 16.8 7.8 17.2 7.7 17.6C7.6 18 7.5 18.4 7.6 18.8C7.6 19.2 7.8 19.5 7.9 19.8C8.1 20.1 8.3 20.3 8.6 20.5C8.8 20.7 9.3 20.9 9.6 21.0C9.9 21.2 10.2 21.3 10.4 21.5C10.7 21.7 11 22 11.1 22.1"/><path d="M11.2 13.8C11.1 14 10.8 14.3 10.6 14.5C10.4 14.7 10 14.9 9.8 15.1C9.5 15.3 9.2 15.5 9.1 15.6"/><path d="M9.9 15.1C10 15.2 10.3 15.4 10.4 15.6C10.6 15.8 10.7 16.1 10.8 16.2"/><path d="M12.4 12.5C12.6 12.5 13.1 12.4 13.4 12.4C13.7 12.5 14 12.6 14.3 12.8C14.5 12.9 14.7 13.2 14.8 13.4C14.9 13.7 14.9 14 14.8 14.3C14.8 14.6 14.7 14.8 14.7 15.2C14.7 15.7 14.8 16.5 14.7 17.1C14.6 17.6 14.5 18.2 14.3 18.6C14.2 18.9 14.1 19.1 13.8 19.3C13.5 19.5 12.9 19.7 12.7 19.8"/><path d="M11.6 13.8C11.7 13.8 12.1 13.8 12.3 13.8C12.4 13.7 12.5 13.4 12.6 13.3C12.7 13.1 12.9 12.9 13.1 12.8C13.3 12.7 13.7 12.6 13.8 12.5"/><path d="M12.2 13.9C12.1 14.1 12.1 14.5 12 14.8C12 15 11.9 15.2 11.8 15.2"/><path d="M11.2 12.1C11.3 12.1 11.6 12.1 11.8 12.2C12 12.3 12.4 12.5 12.4 12.6C12.5 12.7 12.4 12.9 12.3 12.9C12.1 13 11.7 12.9 11.6 12.9C11.4 12.8 11.4 12.6 11.3 12.5"/><path d="M11.8 15.9C12 15.9 12.5 15.9 12.8 15.9C13.2 15.9 13.9 16 14.1 16.1"/><path d="M8.7 16.1C8.9 16.2 9.4 16.5 9.7 16.8C10 17.2 10.3 17.9 10.4 18.1"/><path d="M9.8 15.2C9.9 15.3 10.4 15.6 10.6 15.8C10.8 16.1 11 16.7 11.1 16.8"/><path d="M7.6 18.1C7.7 18.2 8 18.7 8.3 18.9C8.6 19.1 8.9 19.2 9.3 19.2C9.7 19.2 10.3 19 10.6 18.9C10.9 18.8 11.1 18.7 11.2 18.7"/><path d="M8.1 17.9C8.2 18 8.5 18.1 8.7 18.3C8.9 18.5 9.1 18.9 9.1 19.2C9 19.5 8.8 20.2 8.6 20.3C8.4 20.4 8 20 7.9 19.9"/><path d="M7.8 17.5C7.8 17.6 7.7 18.1 7.7 18.5C7.7 18.8 7.7 19.1 7.8 19.5C8 19.8 8.4 20.2 8.5 20.3"/><path d="M9.1 19.0C9.3 19 10 19 10.2 19.2C10.5 19.4 10.5 19.7 10.5 19.9C10.5 20.2 10.3 20.4 10.1 20.6C9.9 20.7 9.4 20.8 9.2 20.8"/><path d="M7.7 18.6C7.8 18.7 7.9 19.1 8.1 19.3C8.2 19.5 8.5 19.8 8.6 19.9"/><path d="M11.6 15.8C11.8 15.8 12.6 15.7 13.1 15.8C13.5 16 14.2 16.4 14.4 16.5"/><path d="M11.3 17.6C11.6 17.6 12.3 17.4 12.8 17.5C13.3 17.5 14 18 14.2 18.1"/><path d="M11.3 19.3C11.4 19.3 11.9 19.1 12.1 19.2C12.3 19.3 12.5 19.5 12.6 19.8C12.6 20 12.6 20.6 12.4 20.7C12.3 20.8 12 20.6 11.8 20.4C11.6 20.3 11.5 19.9 11.4 19.8"/><path d="M13.8 19.4C13.9 19.6 14.2 20.1 14.2 20.4C14.2 20.7 14 21 13.9 21.2"/><path d="M12.7 19.7C12.9 19.6 13.5 19.3 13.8 19.3C14.2 19.3 14.6 19.5 14.8 19.7C15.1 19.9 15.1 20.2 15.3 20.4C15.5 20.7 15.7 20.9 16 21.1C16.3 21.3 16.7 21.5 16.9 21.6C17.2 21.7 17.4 21.6 17.6 21.7C17.8 21.9 17.8 22.2 17.9 22.4C17.9 22.6 17.7 22.6 17.7 22.8C17.8 23 17.9 23.4 18 23.7C18.1 24 18.3 24.3 18.5 24.5C18.8 24.7 19.1 24.9 19.3 25.2C19.6 25.4 19.7 25.6 20 25.8C20.3 26.1 20.7 26.4 20.9 26.7C21.1 27 21.2 27.4 21.2 27.7C21.2 27.9 21.1 28 20.9 28.0C20.7 28.1 20.3 28.1 20 28.2C19.7 28.2 19.4 28.3 19.3 28.3"/><path d="M11.6 20.5C11.7 20.6 12.1 20.8 12.6 20.9C13 21 13.9 21.3 14.3 21.4C14.8 21.5 15 21.6 15.3 21.7C15.6 21.9 15.9 22.1 16.1 22.3C16.4 22.4 16.7 22.7 16.8 22.8C16.9 22.9 16.8 22.8 16.8 23.0C16.8 23.3 17 24.1 17.1 24.5C17.2 24.9 17.2 25.3 17.3 25.7C17.4 26.1 17.6 26.4 17.7 26.7C17.9 27 18.1 27.3 18.3 27.5C18.4 27.7 18.6 27.9 18.8 28.0C19 28.2 19.2 28.3 19.3 28.3"/><path d="M17.1 23.3C17.1 23.6 17.1 24.7 17.2 25.2C17.3 25.7 17.4 25.9 17.6 26.3C17.8 26.8 18 27.3 18.1 27.7C18.3 28 18.5 28.2 18.5 28.3"/><path d="M19.3 25.2C19.4 25.3 19.6 25.6 19.7 25.8C19.8 26.1 19.9 26.4 19.9 26.6C19.9 26.8 19.8 27.2 19.7 27.3"/><path d="M16.9 21.6C16.9 21.7 16.8 22.1 16.7 22.3C16.7 22.5 16.7 22.7 16.8 22.8C16.9 22.9 17.2 23 17.3 23.0C17.5 23 17.7 22.8 17.7 22.8"/><path d="M17.2 25.9C17.3 25.9 17.8 26 18 25.9C18.2 25.9 18.5 25.6 18.7 25.4C18.8 25.3 18.8 25.1 18.8 25.0"/><path d="M18.3 27.4C18.4 27.4 18.8 27.6 19.1 27.7C19.3 27.7 19.6 27.5 19.7 27.5"/><path d="M19.1 27.0C19.1 27.1 19.2 27.6 19.3 27.8C19.4 28 19.7 28.1 19.7 28.2"/><path d="M9.7 21.1C9.9 21.2 10.6 21.6 11 21.8C11.4 22 11.9 22.2 12.1 22.4C12.3 22.6 12.3 22.7 12.2 23.1C12.1 23.5 11.8 24.2 11.7 24.7C11.5 25.1 11.3 25.4 11.3 25.7C11.2 26.1 11.1 26.4 11.1 26.8C11.2 27.2 11.3 27.7 11.5 28.1C11.7 28.4 11.8 28.7 12.2 28.9C12.6 29.1 13.4 29.1 13.7 29.1"/><path d="M12.6 22.0C12.7 22.1 13.2 22.1 13.4 22.3C13.5 22.5 13.5 22.8 13.5 23.4C13.5 23.9 13.4 24.8 13.4 25.3C13.3 25.9 13.3 26.2 13.3 26.6C13.3 27.1 13.3 27.7 13.4 28.1C13.5 28.5 13.6 28.9 13.7 29.0"/><path d="M12.1 22.8C12.2 22.8 12.5 22.5 12.7 22.6C13 22.6 13.4 22.9 13.5 23.0"/><path d="M12.2 23.2L13.4 23.1"/><path d="M11.9 22.7C12 22.6 12.4 22.2 12.6 22.0C12.7 21.8 12.8 21.6 12.9 21.5"/><path d="M11 26.0C11.2 26 11.7 26.2 12.1 26.2C12.4 26.2 12.9 26 13.1 26.0"/><path d="M11.4 27.7C11.5 27.8 11.9 28 12.2 28.1C12.5 28.2 13.2 28.2 13.4 28.2"/><path d="M11.3 25.0C11.3 25.2 11 25.8 11 26.2C10.9 26.6 11 26.9 11.1 27.2C11.2 27.5 11.4 27.9 11.6 28.2C11.8 28.4 12.2 28.6 12.3 28.7"/><path d="M11.6 28.1C11.7 28.1 12.1 28.3 12.3 28.3C12.6 28.4 13.1 28.3 13.2 28.3"/><path d="M11.6 26.8L11.8 27.7"/><path d="M11.7 27.0L11.5 27.8"/><path d="M10.4 26.8L10.3 27.2"/><path d="M11 25.8C11.1 25.9 11.5 26.2 11.8 26.2C12.2 26.3 12.6 26.2 12.8 26.1C13.1 26 13.2 25.8 13.2 25.7"/><path d="M12.2 21.6C12.4 21.7 13.1 21.9 13.3 22.0C13.6 22.1 13.5 22.2 13.5 22.3"/></g></svg></div>
<svg style="position:absolute;left:1132px;top:331px" width="18" height="75">
<g><path d="M2 8C5 3 13 3 16 8C13 12 5 12 2 8Z" fill="#fff" stroke="#111" stroke-width="1.1"/><circle cx="9" cy="7.5" r="2.6" fill="#111"/>
<path d="M4 30L11 23L13.5 25.5L6.5 32.5L3.5 33.5Z" fill="#222"/>
<path d="M2 50C5 45 13 45 16 50C13 54 5 54 2 50Z" fill="#fff" stroke="#111" stroke-width="1.1"/><circle cx="9" cy="49.5" r="2.6" fill="#111"/></g></svg>
<div class="t lbl" style="left:1185px;top:333px;font-size:10px">Layer1(2)</div>
<div class="t lbl" style="left:1185px;top:344px;font-size:9px">Normal</div>
<div class="t lbl" style="left:1185px;top:355px;font-size:9px;color:#3a8a8a">40%</div>
<div class="t lbl" style="left:1185px;top:375px;font-size:10px">Layer1</div>
<div class="t lbl" style="left:1185px;top:386px;font-size:9px">Normal</div>
<div class="t lbl" style="left:1185px;top:397px;font-size:9px;color:#3a8a8a">40%</div>
<div style="left:1262px;top:326px;width:15px;height:320px;background:#efefef"></div>
<div class="btnd" style="left:1262px;top:327px;width:14px;height:14px"><i style="left:2px;top:3px;border-left:3px solid transparent;border-right:3px solid transparent;border-bottom:4px solid #fff"></i></div>
<div class="btnd" style="left:1262px;top:632px;width:14px;height:14px"><i style="left:2px;top:4px;border-left:3px solid transparent;border-right:3px solid transparent;border-top:4px solid #fff"></i></div>
<div style="left:1128px;top:646px;width:134px;height:15px;background:#efefef"></div>
<div class="btnd" style="left:1129px;top:647px;width:14px;height:14px"><i style="left:3px;top:2px;border-top:3px solid transparent;border-bottom:3px solid transparent;border-right:4px solid #fff"></i></div>
<div class="btnd" style="left:1247px;top:647px;width:14px;height:14px"><i style="left:4px;top:2px;border-top:3px solid transparent;border-bottom:3px solid transparent;border-left:4px solid #fff"></i></div>
<div style="left:1120px;top:348px;width:3px;height:14px;background:#9a9a9a;border-radius:1px"></div>

<!-- key badges -->
<div style="left:1161px;top:668px;width:14px;height:12px;background:#d0d0d0;border:1px solid #c4c4c4;border-radius:2px"></div>
<div style="left:1178px;top:668px;width:15px;height:12px;background:#dadada;border:1px solid #c4c4c4;border-radius:2px"></div>
<div style="left:1195px;top:668px;width:14px;height:12px;background:#dadada;border:1px solid #c4c4c4;border-radius:2px"></div>
<div style="left:1211px;top:668px;width:15px;height:12px;background:#dadada;border:1px solid #c4c4c4;border-radius:2px"></div>
<div style="left:1228px;top:668px;width:15px;height:12px;background:#dadada;border:1px solid #c4c4c4;border-radius:2px"></div>
<div style="left:1245px;top:668px;width:15px;height:12px;background:#dadada;border:1px solid #c4c4c4;border-radius:2px"></div>
<div style="left:1262px;top:668px;width:15px;height:12px;background:#dadada;border:1px solid #c4c4c4;border-radius:2px"></div>
<div class="t" style="left:1161px;top:669px;font-size:9.5px;font-weight:bold;letter-spacing:-1px;color:#2a2a2a;transform:scaleX(0.82);transform-origin:0 0">Shift</div>
<div class="t" style="left:1179px;top:669px;font-size:9.5px;font-weight:bold;letter-spacing:-0.3px;color:#2a2a2a;transform:scaleX(0.82);transform-origin:0 0">Ctrl</div>
<div class="t" style="left:1197px;top:669px;font-size:9.5px;font-weight:bold;color:#2a2a2a;transform:scaleX(0.82);transform-origin:0 0">Alt</div>
<div class="t" style="left:1212px;top:669px;font-size:9.5px;font-weight:bold;letter-spacing:-0.5px;color:#2a2a2a;transform:scaleX(0.72);transform-origin:0 0">SPC</div>
<svg style="position:absolute;left:1228px;top:668px" width="15" height="12"><path d="M7.5 1.5L9.5 3.5H5.5Z M7.5 10.5L9.5 8.5H5.5Z M2.5 6L4.5 4V8Z M12.5 6L10.5 4V8Z" fill="#222"/><path d="M5 3.5H10V8.5H5Z" fill="none" stroke="#333" stroke-width="0.8"/></svg>
<div class="t" style="left:1246px;top:669px;font-size:9.5px;font-weight:bold;letter-spacing:-0.5px;color:#2a2a2a;transform:scaleX(0.75);transform-origin:0 0">Any</div>
<svg style="position:absolute;left:1262px;top:668px" width="15" height="12"><path d="M4 10L10 3L12 5L6 11L3.5 11.5Z" fill="none" stroke="#222" stroke-width="1"/></svg>
</body></html>
